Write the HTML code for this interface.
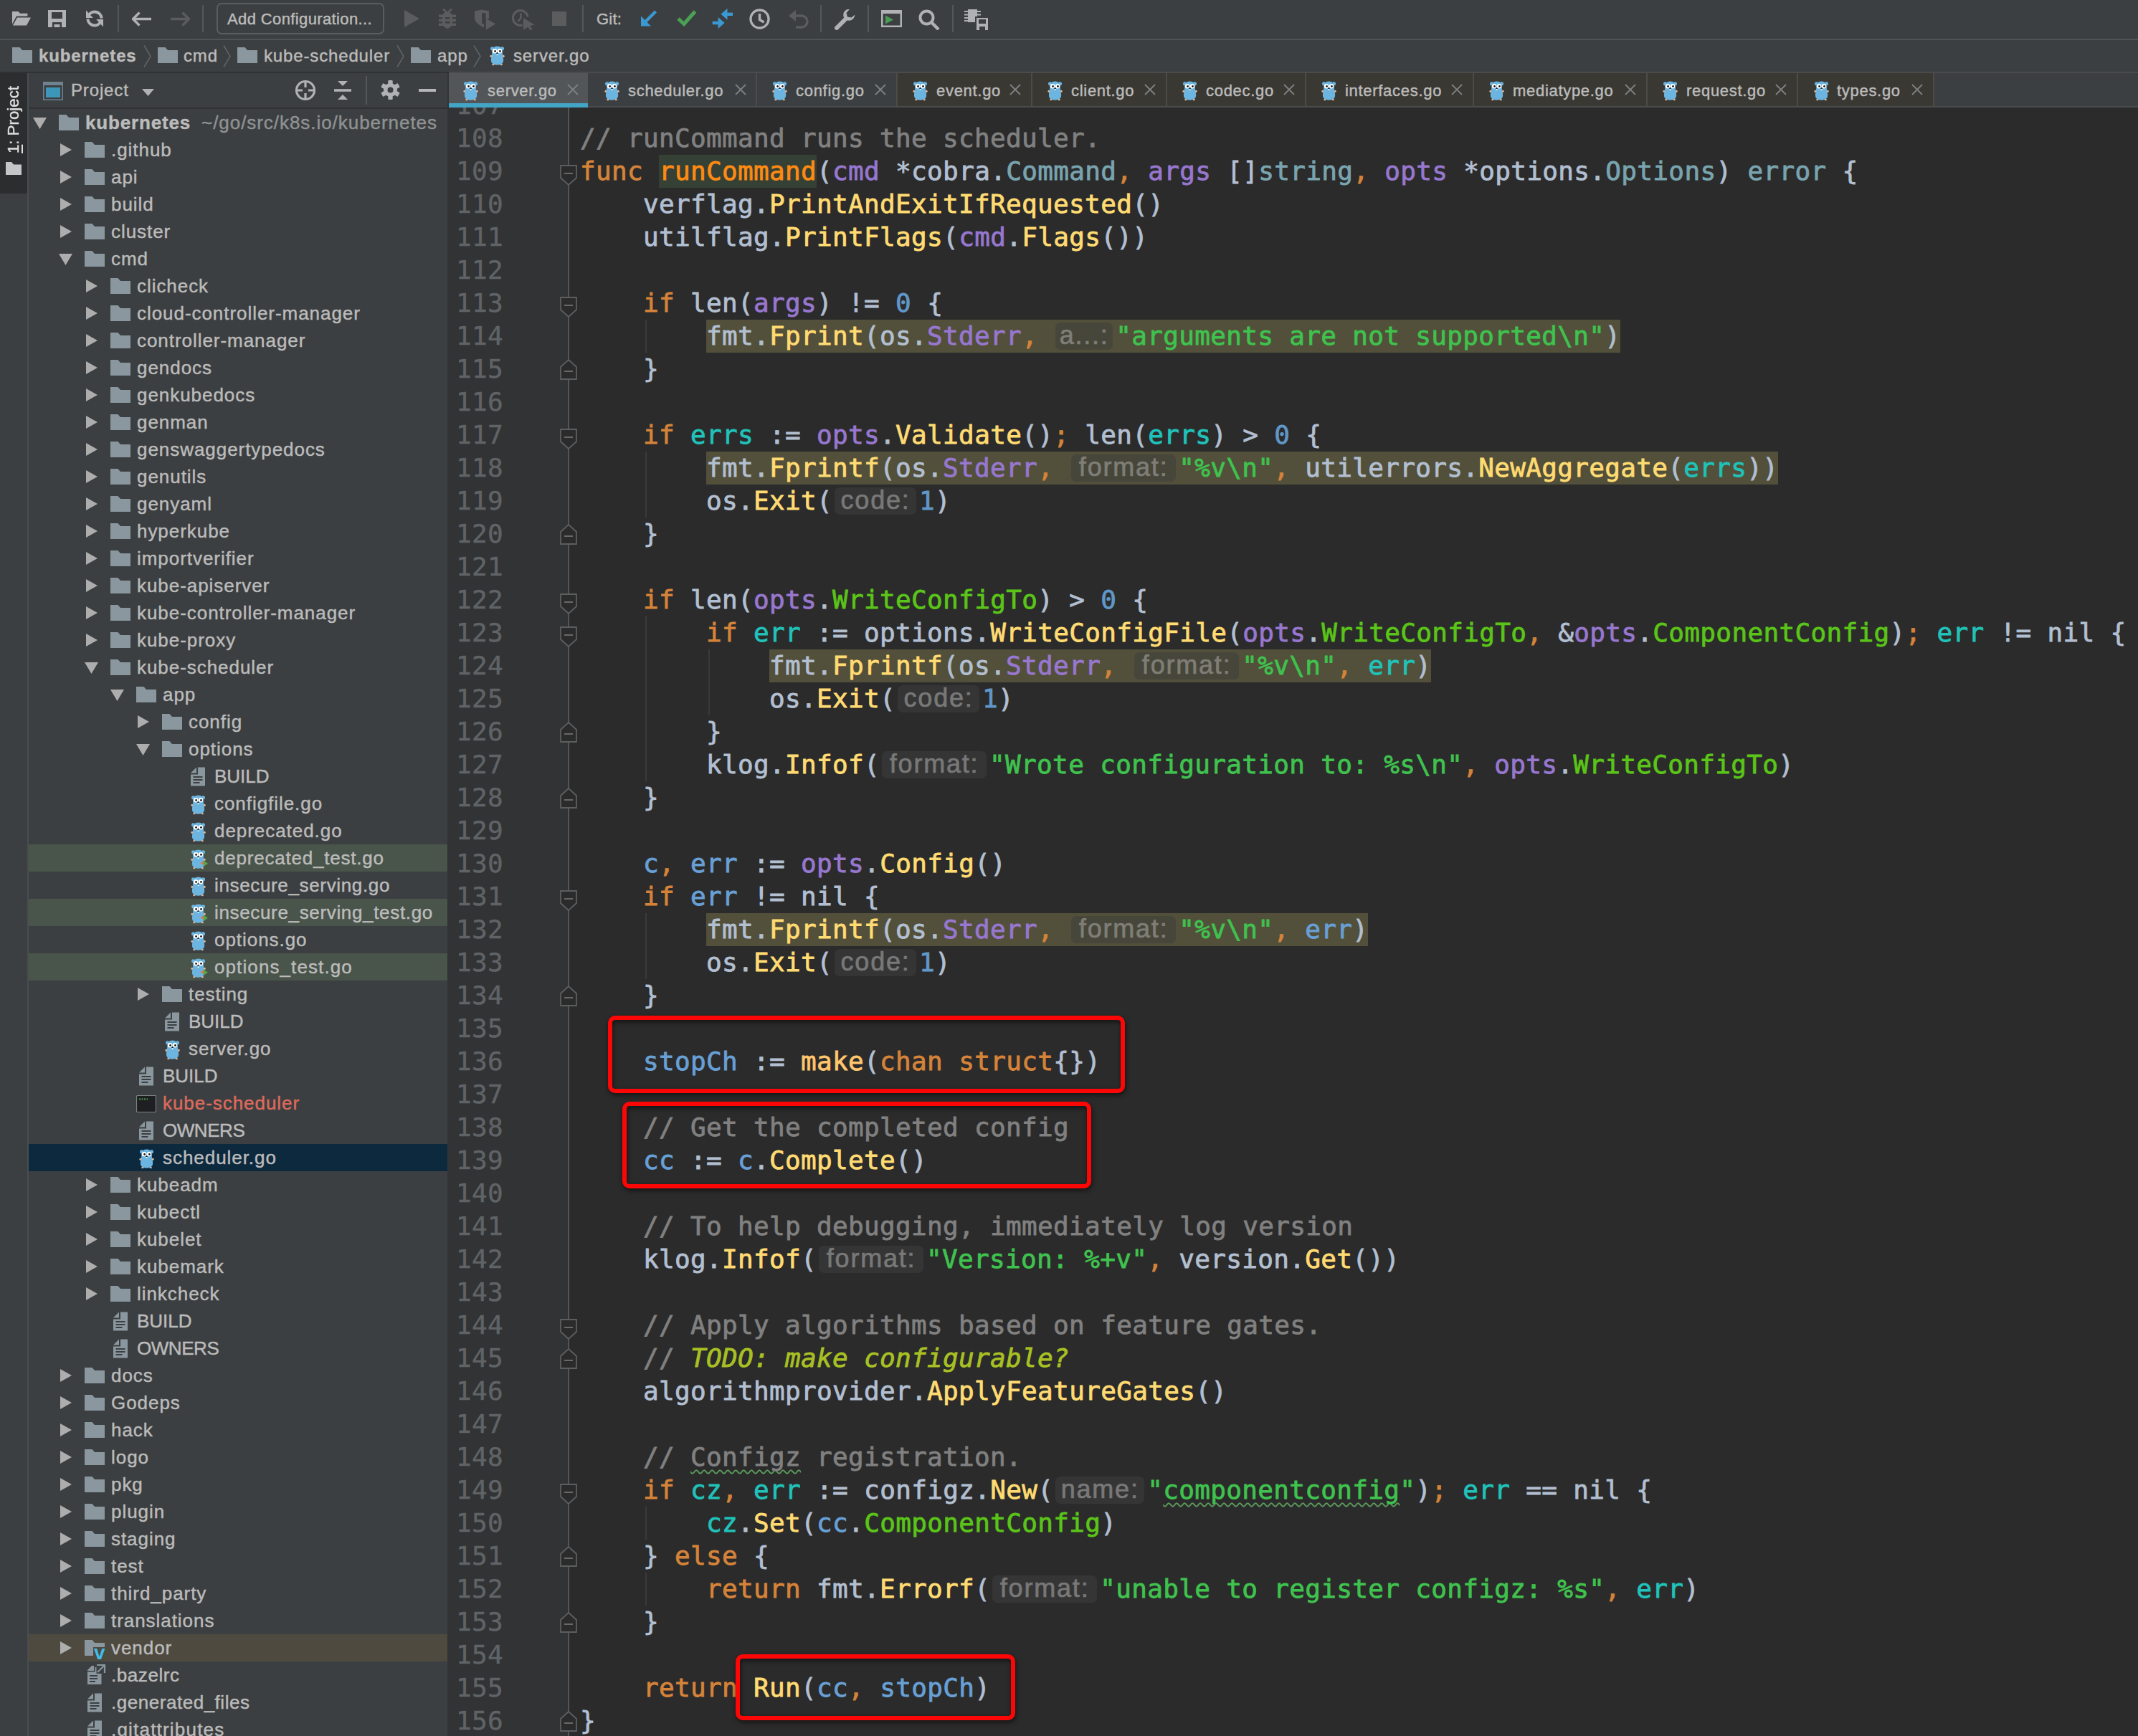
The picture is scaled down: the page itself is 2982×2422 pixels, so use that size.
<!DOCTYPE html>
<html><head><meta charset="utf-8"><title>server.go - kubernetes</title>
<style>
*{box-sizing:border-box;margin:0;padding:0}
html,body{width:2982px;height:2422px;overflow:hidden;background:#3c3f41}
body{position:relative;font-family:"Liberation Sans",sans-serif;font-size:26px;color:#bbbbbb;letter-spacing:0.95px;-webkit-text-stroke:0.45px currentColor}
.ab{position:absolute}
.t{position:absolute;white-space:pre;line-height:38px;height:38px}
.b{font-weight:bold;letter-spacing:0.83px}
.s22{font-size:22px;letter-spacing:0.7px}
.s24{font-size:24px;letter-spacing:0.85px}
#toolbar{left:0;top:0;width:2982px;height:54px;background:#3c3f41}
#tbline{left:0;top:54px;width:2982px;height:2px;background:#515456}
#crumbs{left:0;top:56px;width:2982px;height:44px;background:#3c3f41}
#crline{left:0;top:100px;width:2982px;height:2px;background:#2f3133}
#strip{left:0;top:102px;width:38px;height:2320px;background:#3c3f41}
#striptab{left:0;top:102px;width:38px;height:168px;background:#2b2d2f}
#stripline{left:38px;top:102px;width:2px;height:2320px;background:#4a4d4f}
#side{left:40px;top:102px;width:584px;height:2320px;background:#3c3f41;overflow:hidden}
#sidehead{left:0;top:0;width:584px;height:48px}
#sideline{left:0;top:48px;width:584px;height:2px;background:#2f3133}
#split{left:624px;top:102px;width:2px;height:2320px;background:#313335}
#tabs{left:626px;top:102px;width:2356px;height:48px}
#tabline{left:626px;top:148px;width:2356px;height:2px;background:#4b4b4b}
.tab{position:absolute;top:0;height:46px;border-right:2px solid #4b4b4b}
.tab.v{background:#3a3833;border-right-color:#4c4b48}
.tab .t{top:6px;color:#bbbbbb;font-size:22px;letter-spacing:0.7px}
.x{position:absolute;top:15px;width:16px;height:16px}
#editor{left:626px;top:150px;width:2356px;height:2272px;background:#2b2b2b;overflow:hidden}
#gutter{left:0;top:0;width:166px;height:2272px;background:#313335}
#gline{left:166px;top:0;width:2px;height:2272px;background:#555555}
.ln,.cl{-webkit-text-stroke:0.8px currentColor;position:absolute;font-family:"DejaVu Sans Mono","Liberation Mono",monospace;font-size:36px;letter-spacing:0.33px;line-height:46px;height:46px;white-space:pre}
.ln{left:10px;color:#606366;-webkit-text-stroke:0.45px currentColor}
.cl{left:183px;color:#b2bfd1}
.k{color:#d58339}.fd{color:#ff8a12;background:#344134;display:inline-block;height:46px}
.fc{color:#ffdb72}.p{color:#9777cf}.ty{color:#79a4af}.s{color:#3fc24e}.n{color:#6097c8}
.sv{color:#20c2ba}.lv{color:#68a0d6}.f{color:#5ac418}.c{color:#808080}.td{color:#a8c023;font-style:italic}
.hl{background:#52503a;display:inline-block;height:46px}
.h{display:inline-block;height:38px;line-height:36px;margin:0 4px 0 3px;border-radius:7px;background:#353535;color:#787878;font-family:"Liberation Sans",sans-serif;font-size:36px;letter-spacing:1.8px;text-align:center;vertical-align:top;margin-top:4px;font-style:normal;overflow:hidden;-webkit-text-stroke:0.7px currentColor}
.hl .h{background:#47463b;color:#7f7e76}
.bf{color:#ffc66d}
.cw{color:#808080;text-decoration:underline wavy #5c9a5c 2.4px;text-underline-offset:5px;text-decoration-skip-ink:none}
.sw{color:#3fc24e;text-decoration:underline wavy #5c9a5c 2.4px;text-underline-offset:5px;text-decoration-skip-ink:none}
.row{position:absolute;left:0;width:584px;height:38px}
.g{background:#49544a}.sel{background:#0d293e}.vd{background:#4e4a3f}
.red{position:absolute;border:6px solid #fd0606;border-radius:10px;filter:drop-shadow(1px 3px 3px rgba(0,0,0,.6))}
.fold{position:absolute;left:155px;width:24px;height:29px}
.ig{position:absolute;width:2px;background:#3a3a3a}
</style></head><body>

<div id="toolbar" class="ab">
<svg class="ab" style="left:16px;top:16px" width="28" height="20.5" viewBox="0 0 28 22"><path d="M0 0h9l3 3h11v4H6.500L0 19z" fill="#afb1b3"/><path d="M7.500 9H28l-6.500 12H1z" fill="#afb1b3"/></svg>
<svg class="ab" style="left:67px;top:14px" width="25" height="24" viewBox="0 0 25 24"><path d="M0 0h25v24H0z" fill="#afb1b3"/><path d="M5 3h15v9H5z" fill="#3c3f41"/><path d="M6 17h13v7H6z" fill="#3c3f41"/><path d="M8.500 20h8v4h-8z" fill="#afb1b3"/></svg>
<svg class="ab" style="left:120px;top:14px" width="24" height="24" viewBox="0 0 24 24"><path d="M3.600 7.500A9.600 9.600 0 0 1 21.600 11.500" fill="none" stroke="#afb1b3" stroke-width="4"/><path d="M0 0.500V11h9.800z" fill="#afb1b3"/><path d="M20.400 16.500A9.600 9.600 0 0 1 2.400 12.500" fill="none" stroke="#afb1b3" stroke-width="4"/><path d="M24 23.500V13h-9.800z" fill="#afb1b3"/></svg>
<div class="ab" style="left:164px;top:7px;width:2px;height:38px;background:#555759"></div>
<svg class="ab" style="left:184px;top:16px" width="27" height="21" viewBox="0 0 27 21"><path d="M10.500 1.500l-9 9 9 9M2 10.500h25" fill="none" stroke="#afb1b3" stroke-width="3.400"/></svg>
<svg class="ab" style="left:238px;top:16px" width="27" height="21" viewBox="0 0 27 21"><path d="M16.500 1.500l9 9-9 9M25 10.500H0" fill="none" stroke="#5a5c5e" stroke-width="3.400"/></svg>
<div class="ab" style="left:282px;top:7px;width:2px;height:38px;background:#555759"></div>
<div class="ab" style="left:302px;top:4px;width:234px;height:44px;border:2px solid #5a5d5f;border-radius:7px"></div>
<div class="t s22" style="left:317px;top:8px;letter-spacing:0.38px">Add Configuration...</div>
<svg class="ab" style="left:564px;top:14px" width="21" height="24" viewBox="0 0 21 24"><path d="M0 0l21 12L0 24z" fill="#5a5c5e"/></svg>
<svg class="ab" style="left:612px;top:12px" width="24" height="28" viewBox="0 0 24 28"><path d="M6 0.500l5 5M18 0.500l-5 5" stroke="#5a5c5e" stroke-width="3"/><path d="M0 8.500h24v3.500H0zM0 14.500h24v3.500H0zM0 20.500h24v3.500H0z" fill="#5a5c5e"/><path d="M5 11a7 6.500 0 0 1 14 0v9.500c0 4-3.500 6-7 7.500-3.500-1.500-7-3.500-7-7.500z" fill="#5a5c5e"/><path d="M9 12h6.500v2.500H9zM9 18h6.500v2.500H9z" fill="#3c3f41"/></svg>
<svg class="ab" style="left:661px;top:13px" width="31" height="29" viewBox="0 0 31 29"><path d="M1 2.500L10.500 0.500 21 2.500V13h-7v12C5 21.500 1 17 1 11z" fill="#5a5c5e"/><path d="M11.200 5.200h5.300v15h-5.300z" fill="#3c3f41"/><path d="M16.800 12.700l13.500 7.800-13.500 7.900z" fill="#5a5c5e"/></svg>
<svg class="ab" style="left:713px;top:12px" width="34" height="31" viewBox="0 0 34 31"><circle cx="12.800" cy="13" r="10.400" fill="none" stroke="#5a5c5e" stroke-width="3"/><path d="M13.500 6.500v6.500l-4 5" fill="none" stroke="#5a5c5e" stroke-width="2.600"/><path d="M15.500 11.500h18v19h-18z" fill="#3c3f41"/><path d="M17 13l15.600 9.500-6.600 1.800 3.600 4.400-2.800 1.800-3.400-4.700-6.400 3.700z" fill="#5a5c5e"/></svg>
<svg class="ab" style="left:770px;top:16px" width="20" height="20" viewBox="0 0 20 20"><rect width="20" height="20" fill="#5a5c5e"/></svg>
<div class="ab" style="left:812px;top:7px;width:2px;height:38px;background:#555759"></div>
<div class="t s22" style="left:832px;top:8px;letter-spacing:0.2px">Git:</div>
<svg class="ab" style="left:893px;top:14px" width="24" height="24" viewBox="0 0 24 24"><path d="M21.500 2L5 18.500" stroke="#3a99d2" stroke-width="4.200"/><path d="M1 8.500V22.500h14z" fill="#3a99d2"/></svg>
<svg class="ab" style="left:944px;top:14px" width="28" height="23" viewBox="0 0 28 23"><path d="M2 12l8 7.500L25.500 2" fill="none" stroke="#4aa155" stroke-width="5"/></svg>
<svg class="ab" style="left:993px;top:11px" width="30" height="30" viewBox="0 0 30 30"><path d="M29 8.800H19" stroke="#3a99d2" stroke-width="4.400"/><path d="M21.500 0.800v16l-9-8z" fill="#3a99d2"/><path d="M0.700 21H10" stroke="#3a99d2" stroke-width="4.400"/><path d="M8.600 13v16l9-8z" fill="#3a99d2"/></svg>
<svg class="ab" style="left:1045px;top:12px" width="29" height="29" viewBox="0 0 29 29"><circle cx="14.500" cy="14.500" r="12.500" fill="none" stroke="#afb1b3" stroke-width="3.400"/><path d="M14.500 7v8.500l6 3.500" fill="none" stroke="#afb1b3" stroke-width="3.400"/></svg>
<svg class="ab" style="left:1100px;top:14px" width="28" height="26" viewBox="0 0 28 26"><path d="M6 8h12a8 8 0 0 1 0 16h-8" fill="none" stroke="#5a5c5e" stroke-width="3.400"/><path d="M0 8l10-8v16z" fill="#5a5c5e"/></svg>
<div class="ab" style="left:1144px;top:7px;width:2px;height:38px;background:#555759"></div>
<svg class="ab" style="left:1164px;top:13px" width="29" height="29" viewBox="0 0 29 29"><path d="M3 26L17 12" stroke="#afb1b3" stroke-width="6" stroke-linecap="round"/><path d="M28 5.500l-5 5-5-1-1-5 5-4.500a8 8 0 1 0 6 6z" fill="#afb1b3"/><circle cx="20" cy="9" r="6" fill="#afb1b3"/><path d="M21 0l-4.500 5 1.500 5.500 5.500 1L29 7V0z" fill="#3c3f41"/></svg>
<div class="ab" style="left:1210px;top:7px;width:2px;height:38px;background:#555759"></div>
<svg class="ab" style="left:1229px;top:14px" width="29" height="24" viewBox="0 0 29 24"><path d="M0 0h29v24H0z" fill="#afb1b3"/><path d="M2.500 5h24v16.500h-24z" fill="#3c3f41"/><path d="M6 7.500l11 6-11 6z" fill="#499c54"/></svg>
<svg class="ab" style="left:1281px;top:13px" width="30" height="29" viewBox="0 0 30 29"><circle cx="11.500" cy="11.500" r="9" fill="none" stroke="#afb1b3" stroke-width="4"/><path d="M18 18l10 10" stroke="#afb1b3" stroke-width="4.500"/></svg>
<div class="ab" style="left:1328px;top:7px;width:2px;height:38px;background:#555759"></div>
<svg class="ab" style="left:1345px;top:13px" width="34" height="30" viewBox="0 0 34 30"><path d="M5 0h13v18H5z" fill="#afb1b3"/><path d="M0 3h5M0 7.500h5M0 12h5M0 16h5M18 3h5M18 7.500h5" stroke="#afb1b3" stroke-width="2.200"/><path d="M16 11h18v19H16z" fill="#afb1b3" stroke="#3c3f41" stroke-width="2"/><path d="M20 14h10v6H20zM21 24h8v5h-8z" fill="#3c3f41"/></svg>
</div>
<div id="tbline" class="ab"></div>
<div id="crumbs" class="ab">
<svg class="ab" style="left:17px;top:10px" width="28" height="22" viewBox="0 0 28 22"><path d="M0 0h10.5l3.5 4H28v18H0z" fill="#8a979f"/></svg>
<div class="t s24 b" style="left:54px;top:3px">kubernetes</div>
<svg class="ab" style="left:200px;top:7px" width="11" height="31" viewBox="0 0 11 31"><path d="M1 0.500l9 15-9 15" fill="none" stroke="#5f6365" stroke-width="1.600"/></svg>
<svg class="ab" style="left:220px;top:10px" width="28" height="22" viewBox="0 0 28 22"><path d="M0 0h10.5l3.5 4H28v18H0z" fill="#8a979f"/></svg>
<div class="t s24" style="left:256px;top:3px">cmd</div>
<svg class="ab" style="left:311px;top:7px" width="11" height="31" viewBox="0 0 11 31"><path d="M1 0.500l9 15-9 15" fill="none" stroke="#5f6365" stroke-width="1.600"/></svg>
<svg class="ab" style="left:331px;top:10px" width="28" height="22" viewBox="0 0 28 22"><path d="M0 0h10.5l3.5 4H28v18H0z" fill="#8a979f"/></svg>
<div class="t s24" style="left:368px;top:3px">kube-scheduler</div>
<svg class="ab" style="left:553px;top:7px" width="11" height="31" viewBox="0 0 11 31"><path d="M1 0.500l9 15-9 15" fill="none" stroke="#5f6365" stroke-width="1.600"/></svg>
<svg class="ab" style="left:573px;top:10px" width="28" height="22" viewBox="0 0 28 22"><path d="M0 0h10.5l3.5 4H28v18H0z" fill="#8a979f"/></svg>
<div class="t s24" style="left:610px;top:3px">app</div>
<svg class="ab" style="left:660px;top:7px" width="11" height="31" viewBox="0 0 11 31"><path d="M1 0.500l9 15-9 15" fill="none" stroke="#5f6365" stroke-width="1.600"/></svg>
<svg class="ab" style="left:683px;top:7px" width="21.1" height="28.8" viewBox="0 0 22 30"><circle cx="3.800" cy="5" r="2.700" fill="#6cb5e0"/><circle cx="18.200" cy="5" r="2.700" fill="#6cb5e0"/><path d="M11 1.500C6 1.500 3.500 5 3.500 10c0 4-1.500 7.500-1.500 12 0 4.800 4 7 9 7s9-2.200 9-7c0-4.500-1.500-8-1.500-12 0-5-2.500-8.500-7.500-8.500z" fill="#6cb5e0"/><ellipse cx="1.900" cy="16" rx="1.500" ry="1.800" fill="#dcb89a"/><ellipse cx="20.100" cy="16" rx="1.500" ry="1.800" fill="#dcb89a"/><ellipse cx="5" cy="28.300" rx="1.700" ry="1.200" fill="#dcb89a"/><ellipse cx="17" cy="28.300" rx="1.700" ry="1.200" fill="#dcb89a"/><circle cx="7.400" cy="8.600" r="3.400" fill="#fff"/><circle cx="14.600" cy="8.600" r="3.400" fill="#fff"/><circle cx="7.900" cy="8.800" r="1.400" fill="#111"/><circle cx="15.100" cy="8.800" r="1.400" fill="#111"/><ellipse cx="11" cy="11.700" rx="1.400" ry="1.100" fill="#222"/><rect x="10" y="12.700" width="2" height="1.900" rx="0.500" fill="#fff"/></svg>
<div class="t s24" style="left:716px;top:3px">server.go</div>
</div>
<div id="crline" class="ab"></div>
<div id="strip" class="ab"></div><div id="striptab" class="ab">
<div class="ab" style="left:0;top:18px;width:38px;height:94px;writing-mode:vertical-rl;transform:rotate(180deg);color:#dfdfdf;white-space:pre;letter-spacing:0.1px;font-size:22px;line-height:38px;text-align:center"><span style="text-decoration:underline">1</span>: Project</div>
<svg class="ab" style="left:8px;top:124px" width="22" height="18" viewBox="0 0 22 18"><path d="M0 0h8l3 3.500h11V18H0z" fill="#c4c6c8"/></svg>
</div><div id="stripline" class="ab"></div>
<div id="side" class="ab">
<div id="sidehead" class="ab">
<svg class="ab" style="left:20px;top:12px" width="28" height="26" viewBox="0 0 28 26"><path d="M0 0h28v26H0z" fill="#6e8290"/><path d="M1.500 5h25v19.500h-25z" fill="#3c3f41"/><path d="M4 8h20v14H4z" fill="#3d96b8"/></svg>
<div class="t s24" style="left:59px;top:5px">Project</div>
<svg class="ab" style="left:158px;top:22px" width="17" height="10" viewBox="0 0 17 10"><path d="M0 0h17l-8.500 10z" fill="#afb1b3"/></svg>
<svg class="ab" style="left:371px;top:9px" width="30" height="30" viewBox="0 0 30 30"><circle cx="15" cy="15" r="12.500" fill="none" stroke="#afb1b3" stroke-width="3.200"/><path d="M15 2v9M15 19v9M2 15h9M19 15h9" stroke="#afb1b3" stroke-width="3.200"/></svg>
<svg class="ab" style="left:426px;top:11px" width="24" height="26" viewBox="0 0 24 26"><path d="M5 0h14l-7 7z" fill="#afb1b3"/><path d="M0 11.200h24v3.600H0z" fill="#afb1b3"/><path d="M5 26h14l-7-7z" fill="#afb1b3"/></svg>
<div class="ab" style="left:470px;top:4px;width:2px;height:40px;background:#555759"></div>
<svg class="ab" style="left:491px;top:10px" width="27" height="27" viewBox="0 0 27 27"><g transform="translate(13.500 13.500)"><rect x="-3.200" y="-13.500" width="6.400" height="8" rx="1" fill="#afb1b3" transform="rotate(0)"/><rect x="-3.200" y="-13.500" width="6.400" height="8" rx="1" fill="#afb1b3" transform="rotate(60)"/><rect x="-3.200" y="-13.500" width="6.400" height="8" rx="1" fill="#afb1b3" transform="rotate(120)"/><rect x="-3.200" y="-13.500" width="6.400" height="8" rx="1" fill="#afb1b3" transform="rotate(180)"/><rect x="-3.200" y="-13.500" width="6.400" height="8" rx="1" fill="#afb1b3" transform="rotate(240)"/><rect x="-3.200" y="-13.500" width="6.400" height="8" rx="1" fill="#afb1b3" transform="rotate(300)"/><circle r="9.500" fill="#afb1b3"/><circle r="4" fill="#3c3f41"/></g></svg>
<div class="ab" style="left:544px;top:22px;width:24px;height:4px;background:#b4b6b8"></div>
</div><div id="sideline" class="ab"></div>
<div class="row" style="top:50px">
<svg class="ab" style="left:6px;top:12px" width="19" height="16" viewBox="0 0 19 16"><path d="M0 0h19l-9.500 16z" fill="#adadad"/></svg>
<svg class="ab" style="left:42px;top:8px" width="28" height="22" viewBox="0 0 28 22"><path d="M0 0h10.5l3.5 4H28v18H0z" fill="#8a979f"/></svg>
<div class="t b" style="left:79px;top:0">kubernetes</div>
<div class="t" style="left:241px;top:0;color:#8f9193">~/go/src/k8s.io/kubernetes</div>
</div>
<div class="row" style="top:88px">
<svg class="ab" style="left:44px;top:10px" width="16" height="18" viewBox="0 0 16 18"><path d="M0 0l16 9-16 9z" fill="#adadad"/></svg>
<svg class="ab" style="left:78px;top:8px" width="28" height="22" viewBox="0 0 28 22"><path d="M0 0h10.5l3.5 4H28v18H0z" fill="#8a979f"/></svg>
<div class="t" style="left:115px;top:0">.github</div>
</div>
<div class="row" style="top:126px">
<svg class="ab" style="left:44px;top:10px" width="16" height="18" viewBox="0 0 16 18"><path d="M0 0l16 9-16 9z" fill="#adadad"/></svg>
<svg class="ab" style="left:78px;top:8px" width="28" height="22" viewBox="0 0 28 22"><path d="M0 0h10.5l3.5 4H28v18H0z" fill="#8a979f"/></svg>
<div class="t" style="left:115px;top:0">api</div>
</div>
<div class="row" style="top:164px">
<svg class="ab" style="left:44px;top:10px" width="16" height="18" viewBox="0 0 16 18"><path d="M0 0l16 9-16 9z" fill="#adadad"/></svg>
<svg class="ab" style="left:78px;top:8px" width="28" height="22" viewBox="0 0 28 22"><path d="M0 0h10.5l3.5 4H28v18H0z" fill="#8a979f"/></svg>
<div class="t" style="left:115px;top:0">build</div>
</div>
<div class="row" style="top:202px">
<svg class="ab" style="left:44px;top:10px" width="16" height="18" viewBox="0 0 16 18"><path d="M0 0l16 9-16 9z" fill="#adadad"/></svg>
<svg class="ab" style="left:78px;top:8px" width="28" height="22" viewBox="0 0 28 22"><path d="M0 0h10.5l3.5 4H28v18H0z" fill="#8a979f"/></svg>
<div class="t" style="left:115px;top:0">cluster</div>
</div>
<div class="row" style="top:240px">
<svg class="ab" style="left:42px;top:12px" width="19" height="16" viewBox="0 0 19 16"><path d="M0 0h19l-9.500 16z" fill="#adadad"/></svg>
<svg class="ab" style="left:78px;top:8px" width="28" height="22" viewBox="0 0 28 22"><path d="M0 0h10.5l3.5 4H28v18H0z" fill="#8a979f"/></svg>
<div class="t" style="left:115px;top:0">cmd</div>
</div>
<div class="row" style="top:278px">
<svg class="ab" style="left:80px;top:10px" width="16" height="18" viewBox="0 0 16 18"><path d="M0 0l16 9-16 9z" fill="#adadad"/></svg>
<svg class="ab" style="left:114px;top:8px" width="28" height="22" viewBox="0 0 28 22"><path d="M0 0h10.5l3.5 4H28v18H0z" fill="#8a979f"/></svg>
<div class="t" style="left:151px;top:0">clicheck</div>
</div>
<div class="row" style="top:316px">
<svg class="ab" style="left:80px;top:10px" width="16" height="18" viewBox="0 0 16 18"><path d="M0 0l16 9-16 9z" fill="#adadad"/></svg>
<svg class="ab" style="left:114px;top:8px" width="28" height="22" viewBox="0 0 28 22"><path d="M0 0h10.5l3.5 4H28v18H0z" fill="#8a979f"/></svg>
<div class="t" style="left:151px;top:0">cloud-controller-manager</div>
</div>
<div class="row" style="top:354px">
<svg class="ab" style="left:80px;top:10px" width="16" height="18" viewBox="0 0 16 18"><path d="M0 0l16 9-16 9z" fill="#adadad"/></svg>
<svg class="ab" style="left:114px;top:8px" width="28" height="22" viewBox="0 0 28 22"><path d="M0 0h10.5l3.5 4H28v18H0z" fill="#8a979f"/></svg>
<div class="t" style="left:151px;top:0">controller-manager</div>
</div>
<div class="row" style="top:392px">
<svg class="ab" style="left:80px;top:10px" width="16" height="18" viewBox="0 0 16 18"><path d="M0 0l16 9-16 9z" fill="#adadad"/></svg>
<svg class="ab" style="left:114px;top:8px" width="28" height="22" viewBox="0 0 28 22"><path d="M0 0h10.5l3.5 4H28v18H0z" fill="#8a979f"/></svg>
<div class="t" style="left:151px;top:0">gendocs</div>
</div>
<div class="row" style="top:430px">
<svg class="ab" style="left:80px;top:10px" width="16" height="18" viewBox="0 0 16 18"><path d="M0 0l16 9-16 9z" fill="#adadad"/></svg>
<svg class="ab" style="left:114px;top:8px" width="28" height="22" viewBox="0 0 28 22"><path d="M0 0h10.5l3.5 4H28v18H0z" fill="#8a979f"/></svg>
<div class="t" style="left:151px;top:0">genkubedocs</div>
</div>
<div class="row" style="top:468px">
<svg class="ab" style="left:80px;top:10px" width="16" height="18" viewBox="0 0 16 18"><path d="M0 0l16 9-16 9z" fill="#adadad"/></svg>
<svg class="ab" style="left:114px;top:8px" width="28" height="22" viewBox="0 0 28 22"><path d="M0 0h10.5l3.5 4H28v18H0z" fill="#8a979f"/></svg>
<div class="t" style="left:151px;top:0">genman</div>
</div>
<div class="row" style="top:506px">
<svg class="ab" style="left:80px;top:10px" width="16" height="18" viewBox="0 0 16 18"><path d="M0 0l16 9-16 9z" fill="#adadad"/></svg>
<svg class="ab" style="left:114px;top:8px" width="28" height="22" viewBox="0 0 28 22"><path d="M0 0h10.5l3.5 4H28v18H0z" fill="#8a979f"/></svg>
<div class="t" style="left:151px;top:0">genswaggertypedocs</div>
</div>
<div class="row" style="top:544px">
<svg class="ab" style="left:80px;top:10px" width="16" height="18" viewBox="0 0 16 18"><path d="M0 0l16 9-16 9z" fill="#adadad"/></svg>
<svg class="ab" style="left:114px;top:8px" width="28" height="22" viewBox="0 0 28 22"><path d="M0 0h10.5l3.5 4H28v18H0z" fill="#8a979f"/></svg>
<div class="t" style="left:151px;top:0">genutils</div>
</div>
<div class="row" style="top:582px">
<svg class="ab" style="left:80px;top:10px" width="16" height="18" viewBox="0 0 16 18"><path d="M0 0l16 9-16 9z" fill="#adadad"/></svg>
<svg class="ab" style="left:114px;top:8px" width="28" height="22" viewBox="0 0 28 22"><path d="M0 0h10.5l3.5 4H28v18H0z" fill="#8a979f"/></svg>
<div class="t" style="left:151px;top:0">genyaml</div>
</div>
<div class="row" style="top:620px">
<svg class="ab" style="left:80px;top:10px" width="16" height="18" viewBox="0 0 16 18"><path d="M0 0l16 9-16 9z" fill="#adadad"/></svg>
<svg class="ab" style="left:114px;top:8px" width="28" height="22" viewBox="0 0 28 22"><path d="M0 0h10.5l3.5 4H28v18H0z" fill="#8a979f"/></svg>
<div class="t" style="left:151px;top:0">hyperkube</div>
</div>
<div class="row" style="top:658px">
<svg class="ab" style="left:80px;top:10px" width="16" height="18" viewBox="0 0 16 18"><path d="M0 0l16 9-16 9z" fill="#adadad"/></svg>
<svg class="ab" style="left:114px;top:8px" width="28" height="22" viewBox="0 0 28 22"><path d="M0 0h10.5l3.5 4H28v18H0z" fill="#8a979f"/></svg>
<div class="t" style="left:151px;top:0">importverifier</div>
</div>
<div class="row" style="top:696px">
<svg class="ab" style="left:80px;top:10px" width="16" height="18" viewBox="0 0 16 18"><path d="M0 0l16 9-16 9z" fill="#adadad"/></svg>
<svg class="ab" style="left:114px;top:8px" width="28" height="22" viewBox="0 0 28 22"><path d="M0 0h10.5l3.5 4H28v18H0z" fill="#8a979f"/></svg>
<div class="t" style="left:151px;top:0">kube-apiserver</div>
</div>
<div class="row" style="top:734px">
<svg class="ab" style="left:80px;top:10px" width="16" height="18" viewBox="0 0 16 18"><path d="M0 0l16 9-16 9z" fill="#adadad"/></svg>
<svg class="ab" style="left:114px;top:8px" width="28" height="22" viewBox="0 0 28 22"><path d="M0 0h10.5l3.5 4H28v18H0z" fill="#8a979f"/></svg>
<div class="t" style="left:151px;top:0">kube-controller-manager</div>
</div>
<div class="row" style="top:772px">
<svg class="ab" style="left:80px;top:10px" width="16" height="18" viewBox="0 0 16 18"><path d="M0 0l16 9-16 9z" fill="#adadad"/></svg>
<svg class="ab" style="left:114px;top:8px" width="28" height="22" viewBox="0 0 28 22"><path d="M0 0h10.5l3.5 4H28v18H0z" fill="#8a979f"/></svg>
<div class="t" style="left:151px;top:0">kube-proxy</div>
</div>
<div class="row" style="top:810px">
<svg class="ab" style="left:78px;top:12px" width="19" height="16" viewBox="0 0 19 16"><path d="M0 0h19l-9.500 16z" fill="#adadad"/></svg>
<svg class="ab" style="left:114px;top:8px" width="28" height="22" viewBox="0 0 28 22"><path d="M0 0h10.5l3.5 4H28v18H0z" fill="#8a979f"/></svg>
<div class="t" style="left:151px;top:0">kube-scheduler</div>
</div>
<div class="row" style="top:848px">
<svg class="ab" style="left:114px;top:12px" width="19" height="16" viewBox="0 0 19 16"><path d="M0 0h19l-9.500 16z" fill="#adadad"/></svg>
<svg class="ab" style="left:150px;top:8px" width="28" height="22" viewBox="0 0 28 22"><path d="M0 0h10.5l3.5 4H28v18H0z" fill="#8a979f"/></svg>
<div class="t" style="left:187px;top:0">app</div>
</div>
<div class="row" style="top:886px">
<svg class="ab" style="left:152px;top:10px" width="16" height="18" viewBox="0 0 16 18"><path d="M0 0l16 9-16 9z" fill="#adadad"/></svg>
<svg class="ab" style="left:186px;top:8px" width="28" height="22" viewBox="0 0 28 22"><path d="M0 0h10.5l3.5 4H28v18H0z" fill="#8a979f"/></svg>
<div class="t" style="left:223px;top:0">config</div>
</div>
<div class="row" style="top:924px">
<svg class="ab" style="left:150px;top:12px" width="19" height="16" viewBox="0 0 19 16"><path d="M0 0h19l-9.500 16z" fill="#adadad"/></svg>
<svg class="ab" style="left:186px;top:8px" width="28" height="22" viewBox="0 0 28 22"><path d="M0 0h10.5l3.5 4H28v18H0z" fill="#8a979f"/></svg>
<div class="t" style="left:223px;top:0">options</div>
</div>
<div class="row" style="top:962px">
<svg class="ab" style="left:226px;top:6px" width="26" height="30" viewBox="0 0 26 30"><path d="M0 8.500L8 0.500V8.500z" fill="#8a979f"/><path d="M10 0.500H20V26.500H0V10.500H10z" fill="#8a979f"/><path d="M3.500 14h13M3.500 18h13M3.500 22h9" stroke="#3c3f41" stroke-width="2"/></svg>
<div class="t" style="left:259px;top:0;letter-spacing:0.0px">BUILD</div>
</div>
<div class="row" style="top:1000px">
<svg class="ab" style="left:226px;top:6px" width="21.1" height="28.8" viewBox="0 0 22 30"><circle cx="3.800" cy="5" r="2.700" fill="#6cb5e0"/><circle cx="18.200" cy="5" r="2.700" fill="#6cb5e0"/><path d="M11 1.500C6 1.500 3.500 5 3.500 10c0 4-1.500 7.500-1.500 12 0 4.800 4 7 9 7s9-2.200 9-7c0-4.500-1.500-8-1.500-12 0-5-2.500-8.500-7.500-8.500z" fill="#6cb5e0"/><ellipse cx="1.900" cy="16" rx="1.500" ry="1.800" fill="#dcb89a"/><ellipse cx="20.100" cy="16" rx="1.500" ry="1.800" fill="#dcb89a"/><ellipse cx="5" cy="28.300" rx="1.700" ry="1.200" fill="#dcb89a"/><ellipse cx="17" cy="28.300" rx="1.700" ry="1.200" fill="#dcb89a"/><circle cx="7.400" cy="8.600" r="3.400" fill="#fff"/><circle cx="14.600" cy="8.600" r="3.400" fill="#fff"/><circle cx="7.900" cy="8.800" r="1.400" fill="#111"/><circle cx="15.100" cy="8.800" r="1.400" fill="#111"/><ellipse cx="11" cy="11.700" rx="1.400" ry="1.100" fill="#222"/><rect x="10" y="12.700" width="2" height="1.900" rx="0.500" fill="#fff"/></svg>
<div class="t" style="left:259px;top:0">configfile.go</div>
</div>
<div class="row" style="top:1038px">
<svg class="ab" style="left:226px;top:6px" width="21.1" height="28.8" viewBox="0 0 22 30"><circle cx="3.800" cy="5" r="2.700" fill="#6cb5e0"/><circle cx="18.200" cy="5" r="2.700" fill="#6cb5e0"/><path d="M11 1.500C6 1.500 3.500 5 3.500 10c0 4-1.500 7.500-1.500 12 0 4.800 4 7 9 7s9-2.200 9-7c0-4.500-1.500-8-1.500-12 0-5-2.500-8.500-7.500-8.500z" fill="#6cb5e0"/><ellipse cx="1.900" cy="16" rx="1.500" ry="1.800" fill="#dcb89a"/><ellipse cx="20.100" cy="16" rx="1.500" ry="1.800" fill="#dcb89a"/><ellipse cx="5" cy="28.300" rx="1.700" ry="1.200" fill="#dcb89a"/><ellipse cx="17" cy="28.300" rx="1.700" ry="1.200" fill="#dcb89a"/><circle cx="7.400" cy="8.600" r="3.400" fill="#fff"/><circle cx="14.600" cy="8.600" r="3.400" fill="#fff"/><circle cx="7.900" cy="8.800" r="1.400" fill="#111"/><circle cx="15.100" cy="8.800" r="1.400" fill="#111"/><ellipse cx="11" cy="11.700" rx="1.400" ry="1.100" fill="#222"/><rect x="10" y="12.700" width="2" height="1.900" rx="0.500" fill="#fff"/></svg>
<div class="t" style="left:259px;top:0">deprecated.go</div>
</div>
<div class="row g" style="top:1076px">
<svg class="ab" style="left:226px;top:6px" width="25.0" height="28.8" viewBox="0 0 26 30"><circle cx="3.800" cy="5" r="2.700" fill="#6cb5e0"/><circle cx="18.200" cy="5" r="2.700" fill="#6cb5e0"/><path d="M11 1.500C6 1.500 3.500 5 3.500 10c0 4-1.500 7.500-1.500 12 0 4.800 4 7 9 7s9-2.200 9-7c0-4.500-1.500-8-1.500-12 0-5-2.500-8.500-7.500-8.500z" fill="#6cb5e0"/><ellipse cx="1.900" cy="16" rx="1.500" ry="1.800" fill="#dcb89a"/><ellipse cx="20.100" cy="16" rx="1.500" ry="1.800" fill="#dcb89a"/><ellipse cx="5" cy="28.300" rx="1.700" ry="1.200" fill="#dcb89a"/><ellipse cx="17" cy="28.300" rx="1.700" ry="1.200" fill="#dcb89a"/><circle cx="7.400" cy="8.600" r="3.400" fill="#fff"/><circle cx="14.600" cy="8.600" r="3.400" fill="#fff"/><circle cx="7.900" cy="8.800" r="1.400" fill="#111"/><circle cx="15.100" cy="8.800" r="1.400" fill="#111"/><ellipse cx="11" cy="11.700" rx="1.400" ry="1.100" fill="#222"/><rect x="10" y="12.700" width="2" height="1.900" rx="0.500" fill="#fff"/><path d="M19.500 17.500l-5.500 3.500 5.500 3.500z" fill="#e8734a"/><path d="M18.500 17l6.500 4.500-6.500 4.500z" fill="#57a64a"/></svg>
<div class="t" style="left:259px;top:0;letter-spacing:0.78px">deprecated_test.go</div>
</div>
<div class="row" style="top:1114px">
<svg class="ab" style="left:226px;top:6px" width="21.1" height="28.8" viewBox="0 0 22 30"><circle cx="3.800" cy="5" r="2.700" fill="#6cb5e0"/><circle cx="18.200" cy="5" r="2.700" fill="#6cb5e0"/><path d="M11 1.500C6 1.500 3.500 5 3.500 10c0 4-1.500 7.500-1.500 12 0 4.800 4 7 9 7s9-2.200 9-7c0-4.500-1.500-8-1.500-12 0-5-2.500-8.500-7.500-8.500z" fill="#6cb5e0"/><ellipse cx="1.900" cy="16" rx="1.500" ry="1.800" fill="#dcb89a"/><ellipse cx="20.100" cy="16" rx="1.500" ry="1.800" fill="#dcb89a"/><ellipse cx="5" cy="28.300" rx="1.700" ry="1.200" fill="#dcb89a"/><ellipse cx="17" cy="28.300" rx="1.700" ry="1.200" fill="#dcb89a"/><circle cx="7.400" cy="8.600" r="3.400" fill="#fff"/><circle cx="14.600" cy="8.600" r="3.400" fill="#fff"/><circle cx="7.900" cy="8.800" r="1.400" fill="#111"/><circle cx="15.100" cy="8.800" r="1.400" fill="#111"/><ellipse cx="11" cy="11.700" rx="1.400" ry="1.100" fill="#222"/><rect x="10" y="12.700" width="2" height="1.900" rx="0.500" fill="#fff"/></svg>
<div class="t" style="left:259px;top:0;letter-spacing:0.65px">insecure_serving.go</div>
</div>
<div class="row g" style="top:1152px">
<svg class="ab" style="left:226px;top:6px" width="25.0" height="28.8" viewBox="0 0 26 30"><circle cx="3.800" cy="5" r="2.700" fill="#6cb5e0"/><circle cx="18.200" cy="5" r="2.700" fill="#6cb5e0"/><path d="M11 1.500C6 1.500 3.500 5 3.500 10c0 4-1.500 7.500-1.500 12 0 4.800 4 7 9 7s9-2.200 9-7c0-4.500-1.500-8-1.500-12 0-5-2.500-8.500-7.500-8.500z" fill="#6cb5e0"/><ellipse cx="1.900" cy="16" rx="1.500" ry="1.800" fill="#dcb89a"/><ellipse cx="20.100" cy="16" rx="1.500" ry="1.800" fill="#dcb89a"/><ellipse cx="5" cy="28.300" rx="1.700" ry="1.200" fill="#dcb89a"/><ellipse cx="17" cy="28.300" rx="1.700" ry="1.200" fill="#dcb89a"/><circle cx="7.400" cy="8.600" r="3.400" fill="#fff"/><circle cx="14.600" cy="8.600" r="3.400" fill="#fff"/><circle cx="7.900" cy="8.800" r="1.400" fill="#111"/><circle cx="15.100" cy="8.800" r="1.400" fill="#111"/><ellipse cx="11" cy="11.700" rx="1.400" ry="1.100" fill="#222"/><rect x="10" y="12.700" width="2" height="1.900" rx="0.500" fill="#fff"/><path d="M19.500 17.500l-5.500 3.500 5.500 3.500z" fill="#e8734a"/><path d="M18.500 17l6.500 4.500-6.500 4.500z" fill="#57a64a"/></svg>
<div class="t" style="left:259px;top:0;letter-spacing:0.66px">insecure_serving_test.go</div>
</div>
<div class="row" style="top:1190px">
<svg class="ab" style="left:226px;top:6px" width="21.1" height="28.8" viewBox="0 0 22 30"><circle cx="3.800" cy="5" r="2.700" fill="#6cb5e0"/><circle cx="18.200" cy="5" r="2.700" fill="#6cb5e0"/><path d="M11 1.500C6 1.500 3.500 5 3.500 10c0 4-1.500 7.500-1.500 12 0 4.800 4 7 9 7s9-2.200 9-7c0-4.500-1.500-8-1.500-12 0-5-2.500-8.500-7.500-8.500z" fill="#6cb5e0"/><ellipse cx="1.900" cy="16" rx="1.500" ry="1.800" fill="#dcb89a"/><ellipse cx="20.100" cy="16" rx="1.500" ry="1.800" fill="#dcb89a"/><ellipse cx="5" cy="28.300" rx="1.700" ry="1.200" fill="#dcb89a"/><ellipse cx="17" cy="28.300" rx="1.700" ry="1.200" fill="#dcb89a"/><circle cx="7.400" cy="8.600" r="3.400" fill="#fff"/><circle cx="14.600" cy="8.600" r="3.400" fill="#fff"/><circle cx="7.900" cy="8.800" r="1.400" fill="#111"/><circle cx="15.100" cy="8.800" r="1.400" fill="#111"/><ellipse cx="11" cy="11.700" rx="1.400" ry="1.100" fill="#222"/><rect x="10" y="12.700" width="2" height="1.900" rx="0.500" fill="#fff"/></svg>
<div class="t" style="left:259px;top:0">options.go</div>
</div>
<div class="row g" style="top:1228px">
<svg class="ab" style="left:226px;top:6px" width="25.0" height="28.8" viewBox="0 0 26 30"><circle cx="3.800" cy="5" r="2.700" fill="#6cb5e0"/><circle cx="18.200" cy="5" r="2.700" fill="#6cb5e0"/><path d="M11 1.500C6 1.500 3.500 5 3.500 10c0 4-1.500 7.500-1.500 12 0 4.800 4 7 9 7s9-2.200 9-7c0-4.500-1.500-8-1.500-12 0-5-2.500-8.500-7.500-8.500z" fill="#6cb5e0"/><ellipse cx="1.900" cy="16" rx="1.500" ry="1.800" fill="#dcb89a"/><ellipse cx="20.100" cy="16" rx="1.500" ry="1.800" fill="#dcb89a"/><ellipse cx="5" cy="28.300" rx="1.700" ry="1.200" fill="#dcb89a"/><ellipse cx="17" cy="28.300" rx="1.700" ry="1.200" fill="#dcb89a"/><circle cx="7.400" cy="8.600" r="3.400" fill="#fff"/><circle cx="14.600" cy="8.600" r="3.400" fill="#fff"/><circle cx="7.900" cy="8.800" r="1.400" fill="#111"/><circle cx="15.100" cy="8.800" r="1.400" fill="#111"/><ellipse cx="11" cy="11.700" rx="1.400" ry="1.100" fill="#222"/><rect x="10" y="12.700" width="2" height="1.900" rx="0.500" fill="#fff"/><path d="M19.500 17.500l-5.500 3.500 5.500 3.500z" fill="#e8734a"/><path d="M18.500 17l6.500 4.500-6.500 4.500z" fill="#57a64a"/></svg>
<div class="t" style="left:259px;top:0;letter-spacing:1.1px">options_test.go</div>
</div>
<div class="row" style="top:1266px">
<svg class="ab" style="left:152px;top:10px" width="16" height="18" viewBox="0 0 16 18"><path d="M0 0l16 9-16 9z" fill="#adadad"/></svg>
<svg class="ab" style="left:186px;top:8px" width="28" height="22" viewBox="0 0 28 22"><path d="M0 0h10.5l3.5 4H28v18H0z" fill="#8a979f"/></svg>
<div class="t" style="left:223px;top:0">testing</div>
</div>
<div class="row" style="top:1304px">
<svg class="ab" style="left:190px;top:6px" width="26" height="30" viewBox="0 0 26 30"><path d="M0 8.500L8 0.500V8.500z" fill="#8a979f"/><path d="M10 0.500H20V26.500H0V10.500H10z" fill="#8a979f"/><path d="M3.500 14h13M3.500 18h13M3.500 22h9" stroke="#3c3f41" stroke-width="2"/></svg>
<div class="t" style="left:223px;top:0;letter-spacing:0.0px">BUILD</div>
</div>
<div class="row" style="top:1342px">
<svg class="ab" style="left:190px;top:6px" width="21.1" height="28.8" viewBox="0 0 22 30"><circle cx="3.800" cy="5" r="2.700" fill="#6cb5e0"/><circle cx="18.200" cy="5" r="2.700" fill="#6cb5e0"/><path d="M11 1.500C6 1.500 3.500 5 3.500 10c0 4-1.500 7.500-1.500 12 0 4.800 4 7 9 7s9-2.200 9-7c0-4.500-1.500-8-1.500-12 0-5-2.500-8.500-7.500-8.500z" fill="#6cb5e0"/><ellipse cx="1.900" cy="16" rx="1.500" ry="1.800" fill="#dcb89a"/><ellipse cx="20.100" cy="16" rx="1.500" ry="1.800" fill="#dcb89a"/><ellipse cx="5" cy="28.300" rx="1.700" ry="1.200" fill="#dcb89a"/><ellipse cx="17" cy="28.300" rx="1.700" ry="1.200" fill="#dcb89a"/><circle cx="7.400" cy="8.600" r="3.400" fill="#fff"/><circle cx="14.600" cy="8.600" r="3.400" fill="#fff"/><circle cx="7.900" cy="8.800" r="1.400" fill="#111"/><circle cx="15.100" cy="8.800" r="1.400" fill="#111"/><ellipse cx="11" cy="11.700" rx="1.400" ry="1.100" fill="#222"/><rect x="10" y="12.700" width="2" height="1.900" rx="0.500" fill="#fff"/></svg>
<div class="t" style="left:223px;top:0">server.go</div>
</div>
<div class="row" style="top:1380px">
<svg class="ab" style="left:154px;top:6px" width="26" height="30" viewBox="0 0 26 30"><path d="M0 8.500L8 0.500V8.500z" fill="#8a979f"/><path d="M10 0.500H20V26.500H0V10.500H10z" fill="#8a979f"/><path d="M3.500 14h13M3.500 18h13M3.500 22h9" stroke="#3c3f41" stroke-width="2"/></svg>
<div class="t" style="left:187px;top:0;letter-spacing:0.0px">BUILD</div>
</div>
<div class="row" style="top:1418px">
<svg class="ab" style="left:150px;top:8px" width="28" height="24" viewBox="0 0 28 24"><rect x="0.500" y="0.500" width="27" height="23" rx="1.500" fill="#1e1f20" stroke="#7f8386" stroke-width="1.200"/><path d="M4 5.500h2M7.500 5.500h2M11 5.500h2M14.500 5.500h1.500" stroke="#4aa04a" stroke-width="2"/></svg>
<div class="t" style="left:187px;top:0;color:#dd6a5c">kube-scheduler</div>
</div>
<div class="row" style="top:1456px">
<svg class="ab" style="left:154px;top:6px" width="26" height="30" viewBox="0 0 26 30"><path d="M0 8.500L8 0.500V8.500z" fill="#8a979f"/><path d="M10 0.500H20V26.500H0V10.500H10z" fill="#8a979f"/><path d="M3.500 14h13M3.500 18h13M3.500 22h9" stroke="#3c3f41" stroke-width="2"/></svg>
<div class="t" style="left:187px;top:0;letter-spacing:-0.45px">OWNERS</div>
</div>
<div class="row sel" style="top:1494px">
<svg class="ab" style="left:154px;top:6px" width="21.1" height="28.8" viewBox="0 0 22 30"><circle cx="3.800" cy="5" r="2.700" fill="#6cb5e0"/><circle cx="18.200" cy="5" r="2.700" fill="#6cb5e0"/><path d="M11 1.500C6 1.500 3.500 5 3.500 10c0 4-1.500 7.500-1.500 12 0 4.800 4 7 9 7s9-2.200 9-7c0-4.500-1.500-8-1.500-12 0-5-2.500-8.500-7.500-8.500z" fill="#6cb5e0"/><ellipse cx="1.900" cy="16" rx="1.500" ry="1.800" fill="#dcb89a"/><ellipse cx="20.100" cy="16" rx="1.500" ry="1.800" fill="#dcb89a"/><ellipse cx="5" cy="28.300" rx="1.700" ry="1.200" fill="#dcb89a"/><ellipse cx="17" cy="28.300" rx="1.700" ry="1.200" fill="#dcb89a"/><circle cx="7.400" cy="8.600" r="3.400" fill="#fff"/><circle cx="14.600" cy="8.600" r="3.400" fill="#fff"/><circle cx="7.900" cy="8.800" r="1.400" fill="#111"/><circle cx="15.100" cy="8.800" r="1.400" fill="#111"/><ellipse cx="11" cy="11.700" rx="1.400" ry="1.100" fill="#222"/><rect x="10" y="12.700" width="2" height="1.900" rx="0.500" fill="#fff"/></svg>
<div class="t" style="left:187px;top:0">scheduler.go</div>
</div>
<div class="row" style="top:1532px">
<svg class="ab" style="left:80px;top:10px" width="16" height="18" viewBox="0 0 16 18"><path d="M0 0l16 9-16 9z" fill="#adadad"/></svg>
<svg class="ab" style="left:114px;top:8px" width="28" height="22" viewBox="0 0 28 22"><path d="M0 0h10.5l3.5 4H28v18H0z" fill="#8a979f"/></svg>
<div class="t" style="left:151px;top:0">kubeadm</div>
</div>
<div class="row" style="top:1570px">
<svg class="ab" style="left:80px;top:10px" width="16" height="18" viewBox="0 0 16 18"><path d="M0 0l16 9-16 9z" fill="#adadad"/></svg>
<svg class="ab" style="left:114px;top:8px" width="28" height="22" viewBox="0 0 28 22"><path d="M0 0h10.5l3.5 4H28v18H0z" fill="#8a979f"/></svg>
<div class="t" style="left:151px;top:0">kubectl</div>
</div>
<div class="row" style="top:1608px">
<svg class="ab" style="left:80px;top:10px" width="16" height="18" viewBox="0 0 16 18"><path d="M0 0l16 9-16 9z" fill="#adadad"/></svg>
<svg class="ab" style="left:114px;top:8px" width="28" height="22" viewBox="0 0 28 22"><path d="M0 0h10.5l3.5 4H28v18H0z" fill="#8a979f"/></svg>
<div class="t" style="left:151px;top:0">kubelet</div>
</div>
<div class="row" style="top:1646px">
<svg class="ab" style="left:80px;top:10px" width="16" height="18" viewBox="0 0 16 18"><path d="M0 0l16 9-16 9z" fill="#adadad"/></svg>
<svg class="ab" style="left:114px;top:8px" width="28" height="22" viewBox="0 0 28 22"><path d="M0 0h10.5l3.5 4H28v18H0z" fill="#8a979f"/></svg>
<div class="t" style="left:151px;top:0">kubemark</div>
</div>
<div class="row" style="top:1684px">
<svg class="ab" style="left:80px;top:10px" width="16" height="18" viewBox="0 0 16 18"><path d="M0 0l16 9-16 9z" fill="#adadad"/></svg>
<svg class="ab" style="left:114px;top:8px" width="28" height="22" viewBox="0 0 28 22"><path d="M0 0h10.5l3.5 4H28v18H0z" fill="#8a979f"/></svg>
<div class="t" style="left:151px;top:0">linkcheck</div>
</div>
<div class="row" style="top:1722px">
<svg class="ab" style="left:118px;top:6px" width="26" height="30" viewBox="0 0 26 30"><path d="M0 8.500L8 0.500V8.500z" fill="#8a979f"/><path d="M10 0.500H20V26.500H0V10.500H10z" fill="#8a979f"/><path d="M3.500 14h13M3.500 18h13M3.500 22h9" stroke="#3c3f41" stroke-width="2"/></svg>
<div class="t" style="left:151px;top:0;letter-spacing:0.0px">BUILD</div>
</div>
<div class="row" style="top:1760px">
<svg class="ab" style="left:118px;top:6px" width="26" height="30" viewBox="0 0 26 30"><path d="M0 8.500L8 0.500V8.500z" fill="#8a979f"/><path d="M10 0.500H20V26.500H0V10.500H10z" fill="#8a979f"/><path d="M3.500 14h13M3.500 18h13M3.500 22h9" stroke="#3c3f41" stroke-width="2"/></svg>
<div class="t" style="left:151px;top:0;letter-spacing:-0.45px">OWNERS</div>
</div>
<div class="row" style="top:1798px">
<svg class="ab" style="left:44px;top:10px" width="16" height="18" viewBox="0 0 16 18"><path d="M0 0l16 9-16 9z" fill="#adadad"/></svg>
<svg class="ab" style="left:78px;top:8px" width="28" height="22" viewBox="0 0 28 22"><path d="M0 0h10.5l3.5 4H28v18H0z" fill="#8a979f"/></svg>
<div class="t" style="left:115px;top:0">docs</div>
</div>
<div class="row" style="top:1836px">
<svg class="ab" style="left:44px;top:10px" width="16" height="18" viewBox="0 0 16 18"><path d="M0 0l16 9-16 9z" fill="#adadad"/></svg>
<svg class="ab" style="left:78px;top:8px" width="28" height="22" viewBox="0 0 28 22"><path d="M0 0h10.5l3.5 4H28v18H0z" fill="#8a979f"/></svg>
<div class="t" style="left:115px;top:0">Godeps</div>
</div>
<div class="row" style="top:1874px">
<svg class="ab" style="left:44px;top:10px" width="16" height="18" viewBox="0 0 16 18"><path d="M0 0l16 9-16 9z" fill="#adadad"/></svg>
<svg class="ab" style="left:78px;top:8px" width="28" height="22" viewBox="0 0 28 22"><path d="M0 0h10.5l3.5 4H28v18H0z" fill="#8a979f"/></svg>
<div class="t" style="left:115px;top:0">hack</div>
</div>
<div class="row" style="top:1912px">
<svg class="ab" style="left:44px;top:10px" width="16" height="18" viewBox="0 0 16 18"><path d="M0 0l16 9-16 9z" fill="#adadad"/></svg>
<svg class="ab" style="left:78px;top:8px" width="28" height="22" viewBox="0 0 28 22"><path d="M0 0h10.5l3.5 4H28v18H0z" fill="#8a979f"/></svg>
<div class="t" style="left:115px;top:0">logo</div>
</div>
<div class="row" style="top:1950px">
<svg class="ab" style="left:44px;top:10px" width="16" height="18" viewBox="0 0 16 18"><path d="M0 0l16 9-16 9z" fill="#adadad"/></svg>
<svg class="ab" style="left:78px;top:8px" width="28" height="22" viewBox="0 0 28 22"><path d="M0 0h10.5l3.5 4H28v18H0z" fill="#8a979f"/></svg>
<div class="t" style="left:115px;top:0">pkg</div>
</div>
<div class="row" style="top:1988px">
<svg class="ab" style="left:44px;top:10px" width="16" height="18" viewBox="0 0 16 18"><path d="M0 0l16 9-16 9z" fill="#adadad"/></svg>
<svg class="ab" style="left:78px;top:8px" width="28" height="22" viewBox="0 0 28 22"><path d="M0 0h10.5l3.5 4H28v18H0z" fill="#8a979f"/></svg>
<div class="t" style="left:115px;top:0">plugin</div>
</div>
<div class="row" style="top:2026px">
<svg class="ab" style="left:44px;top:10px" width="16" height="18" viewBox="0 0 16 18"><path d="M0 0l16 9-16 9z" fill="#adadad"/></svg>
<svg class="ab" style="left:78px;top:8px" width="28" height="22" viewBox="0 0 28 22"><path d="M0 0h10.5l3.5 4H28v18H0z" fill="#8a979f"/></svg>
<div class="t" style="left:115px;top:0">staging</div>
</div>
<div class="row" style="top:2064px">
<svg class="ab" style="left:44px;top:10px" width="16" height="18" viewBox="0 0 16 18"><path d="M0 0l16 9-16 9z" fill="#adadad"/></svg>
<svg class="ab" style="left:78px;top:8px" width="28" height="22" viewBox="0 0 28 22"><path d="M0 0h10.5l3.5 4H28v18H0z" fill="#8a979f"/></svg>
<div class="t" style="left:115px;top:0">test</div>
</div>
<div class="row" style="top:2102px">
<svg class="ab" style="left:44px;top:10px" width="16" height="18" viewBox="0 0 16 18"><path d="M0 0l16 9-16 9z" fill="#adadad"/></svg>
<svg class="ab" style="left:78px;top:8px" width="28" height="22" viewBox="0 0 28 22"><path d="M0 0h10.5l3.5 4H28v18H0z" fill="#8a979f"/></svg>
<div class="t" style="left:115px;top:0">third_party</div>
</div>
<div class="row" style="top:2140px">
<svg class="ab" style="left:44px;top:10px" width="16" height="18" viewBox="0 0 16 18"><path d="M0 0l16 9-16 9z" fill="#adadad"/></svg>
<svg class="ab" style="left:78px;top:8px" width="28" height="22" viewBox="0 0 28 22"><path d="M0 0h10.5l3.5 4H28v18H0z" fill="#8a979f"/></svg>
<div class="t" style="left:115px;top:0">translations</div>
</div>
<div class="row vd" style="top:2178px">
<svg class="ab" style="left:44px;top:10px" width="16" height="18" viewBox="0 0 16 18"><path d="M0 0l16 9-16 9z" fill="#adadad"/></svg>
<svg class="ab" style="left:78px;top:8px" width="28" height="22" viewBox="0 0 28 22"><path d="M0 0h10.5l3.5 4H28v18H0z" fill="#8a979f"/></svg>
<div class="ab" style="left:90px;top:18px;width:17px;height:13px;background:#4e4a3f"></div>
<div class="ab" style="left:91px;top:7px;font-size:28px;font-weight:bold;color:#40bde8;line-height:38px;letter-spacing:0;-webkit-text-stroke:0">v</div>
<div class="t" style="left:115px;top:0">vendor</div>
</div>
<div class="row" style="top:2216px">
<svg class="ab" style="left:82px;top:4px" width="26" height="30" viewBox="0 0 26 30"><path d="M0 8L6 2H9V9H0z" fill="#8a979f"/><path d="M0 10.5h10.500V4h2v9h7v15H0z" fill="#8a979f"/><path d="M3 16h11M3 20h11M3 24h8" stroke="#3c3f41" stroke-width="2"/><path d="M13 1h11v11" fill="none" stroke="#8a979f" stroke-width="2.2"/><path d="M23.500 1.500L14 11" stroke="#8a979f" stroke-width="2.200"/></svg>
<div class="t" style="left:115px;top:0;letter-spacing:0.57px">.bazelrc</div>
</div>
<div class="row" style="top:2254px">
<svg class="ab" style="left:82px;top:6px" width="26" height="30" viewBox="0 0 26 30"><path d="M0 8.500L8 0.500V8.500z" fill="#8a979f"/><path d="M10 0.500H20V26.500H0V10.500H10z" fill="#8a979f"/><path d="M3.500 14h13M3.500 18h13M3.500 22h9" stroke="#3c3f41" stroke-width="2"/></svg>
<div class="t" style="left:115px;top:0;letter-spacing:0.53px">.generated_files</div>
</div>
<div class="row" style="top:2292px">
<svg class="ab" style="left:82px;top:6px" width="26" height="30" viewBox="0 0 26 30"><path d="M0 8.500L8 0.500V8.500z" fill="#8a979f"/><path d="M10 0.500H20V26.500H0V10.500H10z" fill="#8a979f"/><path d="M3.500 14h13M3.500 18h13M3.500 22h9" stroke="#3c3f41" stroke-width="2"/></svg>
<div class="t" style="left:115px;top:0;letter-spacing:1.2px">.gitattributes</div>
</div>
</div><div id="split" class="ab"></div>
<div id="tabline" class="ab"></div><div class="ab" style="left:626px;top:100px;width:2356px;height:2px;background:#4b4b4b"></div>
<div id="tabs" class="ab" style="background:none">
<div class="tab" style="left:0px;width:194px;background:#525658;border-right:none;height:48px">
<svg class="ab" style="left:20px;top:10px" width="21.1" height="28.8" viewBox="0 0 22 30"><circle cx="3.800" cy="5" r="2.700" fill="#6cb5e0"/><circle cx="18.200" cy="5" r="2.700" fill="#6cb5e0"/><path d="M11 1.500C6 1.500 3.500 5 3.500 10c0 4-1.500 7.500-1.500 12 0 4.800 4 7 9 7s9-2.200 9-7c0-4.500-1.500-8-1.500-12 0-5-2.500-8.500-7.500-8.500z" fill="#6cb5e0"/><ellipse cx="1.900" cy="16" rx="1.500" ry="1.800" fill="#dcb89a"/><ellipse cx="20.100" cy="16" rx="1.500" ry="1.800" fill="#dcb89a"/><ellipse cx="5" cy="28.300" rx="1.700" ry="1.200" fill="#dcb89a"/><ellipse cx="17" cy="28.300" rx="1.700" ry="1.200" fill="#dcb89a"/><circle cx="7.400" cy="8.600" r="3.400" fill="#fff"/><circle cx="14.600" cy="8.600" r="3.400" fill="#fff"/><circle cx="7.900" cy="8.800" r="1.400" fill="#111"/><circle cx="15.100" cy="8.800" r="1.400" fill="#111"/><ellipse cx="11" cy="11.700" rx="1.400" ry="1.100" fill="#222"/><rect x="10" y="12.700" width="2" height="1.900" rx="0.500" fill="#fff"/></svg>
<div class="t" style="left:54px">server.go</div>
<svg class="x" style="left:165px" viewBox="0 0 16 16"><path d="M1 1l14 14M15 1L1 15" stroke="#7d8082" stroke-width="1.800"/></svg>
<div class="ab" style="left:0;top:42px;width:194px;height:6px;background:#43a5c6"></div>
</div>
<div class="tab" style="left:194px;width:236px">
<svg class="ab" style="left:23px;top:10px" width="21.1" height="28.8" viewBox="0 0 22 30"><circle cx="3.800" cy="5" r="2.700" fill="#6cb5e0"/><circle cx="18.200" cy="5" r="2.700" fill="#6cb5e0"/><path d="M11 1.500C6 1.500 3.500 5 3.500 10c0 4-1.500 7.500-1.500 12 0 4.800 4 7 9 7s9-2.200 9-7c0-4.500-1.500-8-1.500-12 0-5-2.500-8.500-7.500-8.500z" fill="#6cb5e0"/><ellipse cx="1.900" cy="16" rx="1.500" ry="1.800" fill="#dcb89a"/><ellipse cx="20.100" cy="16" rx="1.500" ry="1.800" fill="#dcb89a"/><ellipse cx="5" cy="28.300" rx="1.700" ry="1.200" fill="#dcb89a"/><ellipse cx="17" cy="28.300" rx="1.700" ry="1.200" fill="#dcb89a"/><circle cx="7.400" cy="8.600" r="3.400" fill="#fff"/><circle cx="14.600" cy="8.600" r="3.400" fill="#fff"/><circle cx="7.900" cy="8.800" r="1.400" fill="#111"/><circle cx="15.100" cy="8.800" r="1.400" fill="#111"/><ellipse cx="11" cy="11.700" rx="1.400" ry="1.100" fill="#222"/><rect x="10" y="12.700" width="2" height="1.900" rx="0.500" fill="#fff"/></svg>
<div class="t" style="left:56px">scheduler.go</div>
<svg class="x" style="left:205px" viewBox="0 0 16 16"><path d="M1 1l14 14M15 1L1 15" stroke="#7d8082" stroke-width="1.800"/></svg>
</div>
<div class="tab" style="left:430px;width:196px">
<svg class="ab" style="left:21px;top:10px" width="21.1" height="28.8" viewBox="0 0 22 30"><circle cx="3.800" cy="5" r="2.700" fill="#6cb5e0"/><circle cx="18.200" cy="5" r="2.700" fill="#6cb5e0"/><path d="M11 1.500C6 1.500 3.500 5 3.500 10c0 4-1.500 7.500-1.500 12 0 4.800 4 7 9 7s9-2.200 9-7c0-4.500-1.500-8-1.500-12 0-5-2.500-8.500-7.500-8.500z" fill="#6cb5e0"/><ellipse cx="1.900" cy="16" rx="1.500" ry="1.800" fill="#dcb89a"/><ellipse cx="20.100" cy="16" rx="1.500" ry="1.800" fill="#dcb89a"/><ellipse cx="5" cy="28.300" rx="1.700" ry="1.200" fill="#dcb89a"/><ellipse cx="17" cy="28.300" rx="1.700" ry="1.200" fill="#dcb89a"/><circle cx="7.400" cy="8.600" r="3.400" fill="#fff"/><circle cx="14.600" cy="8.600" r="3.400" fill="#fff"/><circle cx="7.900" cy="8.800" r="1.400" fill="#111"/><circle cx="15.100" cy="8.800" r="1.400" fill="#111"/><ellipse cx="11" cy="11.700" rx="1.400" ry="1.100" fill="#222"/><rect x="10" y="12.700" width="2" height="1.900" rx="0.500" fill="#fff"/></svg>
<div class="t" style="left:54px">config.go</div>
<svg class="x" style="left:164px" viewBox="0 0 16 16"><path d="M1 1l14 14M15 1L1 15" stroke="#7d8082" stroke-width="1.800"/></svg>
</div>
<div class="tab v" style="left:626px;width:188px">
<svg class="ab" style="left:21px;top:10px" width="21.1" height="28.8" viewBox="0 0 22 30"><circle cx="3.800" cy="5" r="2.700" fill="#6cb5e0"/><circle cx="18.200" cy="5" r="2.700" fill="#6cb5e0"/><path d="M11 1.500C6 1.500 3.500 5 3.500 10c0 4-1.500 7.500-1.500 12 0 4.800 4 7 9 7s9-2.200 9-7c0-4.500-1.500-8-1.500-12 0-5-2.500-8.500-7.500-8.500z" fill="#6cb5e0"/><ellipse cx="1.900" cy="16" rx="1.500" ry="1.800" fill="#dcb89a"/><ellipse cx="20.100" cy="16" rx="1.500" ry="1.800" fill="#dcb89a"/><ellipse cx="5" cy="28.300" rx="1.700" ry="1.200" fill="#dcb89a"/><ellipse cx="17" cy="28.300" rx="1.700" ry="1.200" fill="#dcb89a"/><circle cx="7.400" cy="8.600" r="3.400" fill="#fff"/><circle cx="14.600" cy="8.600" r="3.400" fill="#fff"/><circle cx="7.900" cy="8.800" r="1.400" fill="#111"/><circle cx="15.100" cy="8.800" r="1.400" fill="#111"/><ellipse cx="11" cy="11.700" rx="1.400" ry="1.100" fill="#222"/><rect x="10" y="12.700" width="2" height="1.900" rx="0.500" fill="#fff"/></svg>
<div class="t" style="left:54px">event.go</div>
<svg class="x" style="left:156px" viewBox="0 0 16 16"><path d="M1 1l14 14M15 1L1 15" stroke="#7d8082" stroke-width="1.800"/></svg>
</div>
<div class="tab v" style="left:814px;width:188px">
<svg class="ab" style="left:21px;top:10px" width="21.1" height="28.8" viewBox="0 0 22 30"><circle cx="3.800" cy="5" r="2.700" fill="#6cb5e0"/><circle cx="18.200" cy="5" r="2.700" fill="#6cb5e0"/><path d="M11 1.500C6 1.500 3.500 5 3.500 10c0 4-1.500 7.500-1.500 12 0 4.800 4 7 9 7s9-2.200 9-7c0-4.500-1.500-8-1.500-12 0-5-2.500-8.500-7.500-8.500z" fill="#6cb5e0"/><ellipse cx="1.900" cy="16" rx="1.500" ry="1.800" fill="#dcb89a"/><ellipse cx="20.100" cy="16" rx="1.500" ry="1.800" fill="#dcb89a"/><ellipse cx="5" cy="28.300" rx="1.700" ry="1.200" fill="#dcb89a"/><ellipse cx="17" cy="28.300" rx="1.700" ry="1.200" fill="#dcb89a"/><circle cx="7.400" cy="8.600" r="3.400" fill="#fff"/><circle cx="14.600" cy="8.600" r="3.400" fill="#fff"/><circle cx="7.900" cy="8.800" r="1.400" fill="#111"/><circle cx="15.100" cy="8.800" r="1.400" fill="#111"/><ellipse cx="11" cy="11.700" rx="1.400" ry="1.100" fill="#222"/><rect x="10" y="12.700" width="2" height="1.900" rx="0.500" fill="#fff"/></svg>
<div class="t" style="left:54px">client.go</div>
<svg class="x" style="left:156px" viewBox="0 0 16 16"><path d="M1 1l14 14M15 1L1 15" stroke="#7d8082" stroke-width="1.800"/></svg>
</div>
<div class="tab v" style="left:1002px;width:194px">
<svg class="ab" style="left:21px;top:10px" width="21.1" height="28.8" viewBox="0 0 22 30"><circle cx="3.800" cy="5" r="2.700" fill="#6cb5e0"/><circle cx="18.200" cy="5" r="2.700" fill="#6cb5e0"/><path d="M11 1.500C6 1.500 3.500 5 3.500 10c0 4-1.500 7.500-1.500 12 0 4.800 4 7 9 7s9-2.200 9-7c0-4.500-1.500-8-1.500-12 0-5-2.500-8.500-7.500-8.500z" fill="#6cb5e0"/><ellipse cx="1.900" cy="16" rx="1.500" ry="1.800" fill="#dcb89a"/><ellipse cx="20.100" cy="16" rx="1.500" ry="1.800" fill="#dcb89a"/><ellipse cx="5" cy="28.300" rx="1.700" ry="1.200" fill="#dcb89a"/><ellipse cx="17" cy="28.300" rx="1.700" ry="1.200" fill="#dcb89a"/><circle cx="7.400" cy="8.600" r="3.400" fill="#fff"/><circle cx="14.600" cy="8.600" r="3.400" fill="#fff"/><circle cx="7.900" cy="8.800" r="1.400" fill="#111"/><circle cx="15.100" cy="8.800" r="1.400" fill="#111"/><ellipse cx="11" cy="11.700" rx="1.400" ry="1.100" fill="#222"/><rect x="10" y="12.700" width="2" height="1.900" rx="0.500" fill="#fff"/></svg>
<div class="t" style="left:54px">codec.go</div>
<svg class="x" style="left:162px" viewBox="0 0 16 16"><path d="M1 1l14 14M15 1L1 15" stroke="#7d8082" stroke-width="1.800"/></svg>
</div>
<div class="tab v" style="left:1196px;width:234px">
<svg class="ab" style="left:21px;top:10px" width="21.1" height="28.8" viewBox="0 0 22 30"><circle cx="3.800" cy="5" r="2.700" fill="#6cb5e0"/><circle cx="18.200" cy="5" r="2.700" fill="#6cb5e0"/><path d="M11 1.500C6 1.500 3.500 5 3.500 10c0 4-1.500 7.500-1.500 12 0 4.800 4 7 9 7s9-2.200 9-7c0-4.500-1.500-8-1.500-12 0-5-2.500-8.500-7.500-8.500z" fill="#6cb5e0"/><ellipse cx="1.900" cy="16" rx="1.500" ry="1.800" fill="#dcb89a"/><ellipse cx="20.100" cy="16" rx="1.500" ry="1.800" fill="#dcb89a"/><ellipse cx="5" cy="28.300" rx="1.700" ry="1.200" fill="#dcb89a"/><ellipse cx="17" cy="28.300" rx="1.700" ry="1.200" fill="#dcb89a"/><circle cx="7.400" cy="8.600" r="3.400" fill="#fff"/><circle cx="14.600" cy="8.600" r="3.400" fill="#fff"/><circle cx="7.900" cy="8.800" r="1.400" fill="#111"/><circle cx="15.100" cy="8.800" r="1.400" fill="#111"/><ellipse cx="11" cy="11.700" rx="1.400" ry="1.100" fill="#222"/><rect x="10" y="12.700" width="2" height="1.900" rx="0.500" fill="#fff"/></svg>
<div class="t" style="left:54px">interfaces.go</div>
<svg class="x" style="left:202px" viewBox="0 0 16 16"><path d="M1 1l14 14M15 1L1 15" stroke="#7d8082" stroke-width="1.800"/></svg>
</div>
<div class="tab v" style="left:1430px;width:242px">
<svg class="ab" style="left:21px;top:10px" width="21.1" height="28.8" viewBox="0 0 22 30"><circle cx="3.800" cy="5" r="2.700" fill="#6cb5e0"/><circle cx="18.200" cy="5" r="2.700" fill="#6cb5e0"/><path d="M11 1.500C6 1.500 3.500 5 3.500 10c0 4-1.500 7.500-1.500 12 0 4.800 4 7 9 7s9-2.200 9-7c0-4.500-1.500-8-1.500-12 0-5-2.500-8.500-7.500-8.500z" fill="#6cb5e0"/><ellipse cx="1.900" cy="16" rx="1.500" ry="1.800" fill="#dcb89a"/><ellipse cx="20.100" cy="16" rx="1.500" ry="1.800" fill="#dcb89a"/><ellipse cx="5" cy="28.300" rx="1.700" ry="1.200" fill="#dcb89a"/><ellipse cx="17" cy="28.300" rx="1.700" ry="1.200" fill="#dcb89a"/><circle cx="7.400" cy="8.600" r="3.400" fill="#fff"/><circle cx="14.600" cy="8.600" r="3.400" fill="#fff"/><circle cx="7.900" cy="8.800" r="1.400" fill="#111"/><circle cx="15.100" cy="8.800" r="1.400" fill="#111"/><ellipse cx="11" cy="11.700" rx="1.400" ry="1.100" fill="#222"/><rect x="10" y="12.700" width="2" height="1.900" rx="0.500" fill="#fff"/></svg>
<div class="t" style="left:54px">mediatype.go</div>
<svg class="x" style="left:210px" viewBox="0 0 16 16"><path d="M1 1l14 14M15 1L1 15" stroke="#7d8082" stroke-width="1.800"/></svg>
</div>
<div class="tab v" style="left:1672px;width:210px">
<svg class="ab" style="left:21px;top:10px" width="21.1" height="28.8" viewBox="0 0 22 30"><circle cx="3.800" cy="5" r="2.700" fill="#6cb5e0"/><circle cx="18.200" cy="5" r="2.700" fill="#6cb5e0"/><path d="M11 1.500C6 1.500 3.500 5 3.500 10c0 4-1.500 7.500-1.500 12 0 4.800 4 7 9 7s9-2.200 9-7c0-4.500-1.500-8-1.500-12 0-5-2.500-8.500-7.500-8.500z" fill="#6cb5e0"/><ellipse cx="1.900" cy="16" rx="1.500" ry="1.800" fill="#dcb89a"/><ellipse cx="20.100" cy="16" rx="1.500" ry="1.800" fill="#dcb89a"/><ellipse cx="5" cy="28.300" rx="1.700" ry="1.200" fill="#dcb89a"/><ellipse cx="17" cy="28.300" rx="1.700" ry="1.200" fill="#dcb89a"/><circle cx="7.400" cy="8.600" r="3.400" fill="#fff"/><circle cx="14.600" cy="8.600" r="3.400" fill="#fff"/><circle cx="7.900" cy="8.800" r="1.400" fill="#111"/><circle cx="15.100" cy="8.800" r="1.400" fill="#111"/><ellipse cx="11" cy="11.700" rx="1.400" ry="1.100" fill="#222"/><rect x="10" y="12.700" width="2" height="1.900" rx="0.500" fill="#fff"/></svg>
<div class="t" style="left:54px">request.go</div>
<svg class="x" style="left:178px" viewBox="0 0 16 16"><path d="M1 1l14 14M15 1L1 15" stroke="#7d8082" stroke-width="1.800"/></svg>
</div>
<div class="tab v" style="left:1882px;width:190px">
<svg class="ab" style="left:22px;top:10px" width="21.1" height="28.8" viewBox="0 0 22 30"><circle cx="3.800" cy="5" r="2.700" fill="#6cb5e0"/><circle cx="18.200" cy="5" r="2.700" fill="#6cb5e0"/><path d="M11 1.500C6 1.500 3.500 5 3.500 10c0 4-1.500 7.500-1.500 12 0 4.800 4 7 9 7s9-2.200 9-7c0-4.500-1.500-8-1.500-12 0-5-2.500-8.500-7.500-8.500z" fill="#6cb5e0"/><ellipse cx="1.900" cy="16" rx="1.500" ry="1.800" fill="#dcb89a"/><ellipse cx="20.100" cy="16" rx="1.500" ry="1.800" fill="#dcb89a"/><ellipse cx="5" cy="28.300" rx="1.700" ry="1.200" fill="#dcb89a"/><ellipse cx="17" cy="28.300" rx="1.700" ry="1.200" fill="#dcb89a"/><circle cx="7.400" cy="8.600" r="3.400" fill="#fff"/><circle cx="14.600" cy="8.600" r="3.400" fill="#fff"/><circle cx="7.900" cy="8.800" r="1.400" fill="#111"/><circle cx="15.100" cy="8.800" r="1.400" fill="#111"/><ellipse cx="11" cy="11.700" rx="1.400" ry="1.100" fill="#222"/><rect x="10" y="12.700" width="2" height="1.900" rx="0.500" fill="#fff"/></svg>
<div class="t" style="left:54px">types.go</div>
<svg class="x" style="left:158px" viewBox="0 0 16 16"><path d="M1 1l14 14M15 1L1 15" stroke="#7d8082" stroke-width="1.800"/></svg>
</div>
</div>
<div id="editor" class="ab"><div id="gutter" class="ab"></div><div id="gline" class="ab"></div>
<div class="ln" style="top:-26px">107</div>
<div class="ln" style="top:20px">108</div>
<div class="cl" style="top:20px"><span class="c">// runCommand runs the scheduler.</span></div>
<div class="ln" style="top:66px">109</div>
<svg class="fold" style="top:80px" viewBox="0 0 24 29"><path d="M1 1h22v17L12 28 1 18z" fill="#2b2b2b" stroke="#5c5e60" stroke-width="1.800"/><path d="M6 12h12" stroke="#6e7072" stroke-width="1.800"/></svg>
<div class="cl" style="top:66px"><span class="k">func</span> <span class="fd">runCommand</span>(<span class="p">cmd</span> *cobra.<span class="ty">Command</span><span class="k">,</span> <span class="p">args</span> []<span class="ty">string</span><span class="k">,</span> <span class="p">opts</span> *options.<span class="ty">Options</span>) <span class="ty">error</span> {</div>
<div class="ln" style="top:112px">110</div>
<div class="cl" style="top:112px">    verflag.<span class="fc">PrintAndExitIfRequested</span>()</div>
<div class="ln" style="top:158px">111</div>
<div class="cl" style="top:158px">    utilflag.<span class="fc">PrintFlags</span>(<span class="p">cmd</span>.<span class="fc">Flags</span>())</div>
<div class="ln" style="top:204px">112</div>
<div class="ln" style="top:250px">113</div>
<svg class="fold" style="top:264px" viewBox="0 0 24 29"><path d="M1 1h22v17L12 28 1 18z" fill="#2b2b2b" stroke="#5c5e60" stroke-width="1.800"/><path d="M6 12h12" stroke="#6e7072" stroke-width="1.800"/></svg>
<div class="cl" style="top:250px">    <span class="k">if</span> len(<span class="p">args</span>) != <span class="n">0</span> {</div>
<div class="ln" style="top:296px">114</div>
<div class="cl" style="top:296px">        <span class="hl">fmt.<span class="fc">Fprint</span>(os.<span class="p">Stderr</span><span class="k">,</span> <span class="h" style="width:80px">a...:</span><span class="s">"arguments are not supported\n"</span>)</span></div>
<div class="ln" style="top:342px">115</div>
<svg class="fold" style="top:351px" viewBox="0 0 24 29"><path d="M12 1l11 10v17H1V11z" fill="#2b2b2b" stroke="#5c5e60" stroke-width="1.800"/><path d="M6 17h12" stroke="#6e7072" stroke-width="1.800"/></svg>
<div class="cl" style="top:342px">    }</div>
<div class="ln" style="top:388px">116</div>
<div class="ln" style="top:434px">117</div>
<svg class="fold" style="top:448px" viewBox="0 0 24 29"><path d="M1 1h22v17L12 28 1 18z" fill="#2b2b2b" stroke="#5c5e60" stroke-width="1.800"/><path d="M6 12h12" stroke="#6e7072" stroke-width="1.800"/></svg>
<div class="cl" style="top:434px">    <span class="k">if</span> <span class="sv">errs</span> := <span class="p">opts</span>.<span class="fc">Validate</span>()<span class="k">;</span> len(<span class="sv">errs</span>) &gt; <span class="n">0</span> {</div>
<div class="ln" style="top:480px">118</div>
<div class="cl" style="top:480px">        <span class="hl">fmt.<span class="fc">Fprintf</span>(os.<span class="p">Stderr</span><span class="k">,</span> <span class="h" style="width:146px">format:</span><span class="s">"%v\n"</span><span class="k">,</span> utilerrors.<span class="fc">NewAggregate</span>(<span class="sv">errs</span>))</span></div>
<div class="ln" style="top:526px">119</div>
<div class="cl" style="top:526px">        os.<span class="fc">Exit</span>(<span class="h" style="width:114px">code:</span><span class="n">1</span>)</div>
<div class="ln" style="top:572px">120</div>
<svg class="fold" style="top:581px" viewBox="0 0 24 29"><path d="M12 1l11 10v17H1V11z" fill="#2b2b2b" stroke="#5c5e60" stroke-width="1.800"/><path d="M6 17h12" stroke="#6e7072" stroke-width="1.800"/></svg>
<div class="cl" style="top:572px">    }</div>
<div class="ln" style="top:618px">121</div>
<div class="ln" style="top:664px">122</div>
<svg class="fold" style="top:678px" viewBox="0 0 24 29"><path d="M1 1h22v17L12 28 1 18z" fill="#2b2b2b" stroke="#5c5e60" stroke-width="1.800"/><path d="M6 12h12" stroke="#6e7072" stroke-width="1.800"/></svg>
<div class="cl" style="top:664px">    <span class="k">if</span> len(<span class="p">opts</span>.<span class="f">WriteConfigTo</span>) &gt; <span class="n">0</span> {</div>
<div class="ln" style="top:710px">123</div>
<svg class="fold" style="top:724px" viewBox="0 0 24 29"><path d="M1 1h22v17L12 28 1 18z" fill="#2b2b2b" stroke="#5c5e60" stroke-width="1.800"/><path d="M6 12h12" stroke="#6e7072" stroke-width="1.800"/></svg>
<div class="cl" style="top:710px">        <span class="k">if</span> <span class="sv">err</span> := options.<span class="fc">WriteConfigFile</span>(<span class="p">opts</span>.<span class="f">WriteConfigTo</span><span class="k">,</span> &amp;<span class="p">opts</span>.<span class="f">ComponentConfig</span>)<span class="k">;</span> <span class="sv">err</span> != nil {</div>
<div class="ln" style="top:756px">124</div>
<div class="cl" style="top:756px">            <span class="hl">fmt.<span class="fc">Fprintf</span>(os.<span class="p">Stderr</span><span class="k">,</span> <span class="h" style="width:146px">format:</span><span class="s">"%v\n"</span><span class="k">,</span> <span class="sv">err</span>)</span></div>
<div class="ln" style="top:802px">125</div>
<div class="cl" style="top:802px">            os.<span class="fc">Exit</span>(<span class="h" style="width:114px">code:</span><span class="n">1</span>)</div>
<div class="ln" style="top:848px">126</div>
<svg class="fold" style="top:857px" viewBox="0 0 24 29"><path d="M12 1l11 10v17H1V11z" fill="#2b2b2b" stroke="#5c5e60" stroke-width="1.800"/><path d="M6 17h12" stroke="#6e7072" stroke-width="1.800"/></svg>
<div class="cl" style="top:848px">        }</div>
<div class="ln" style="top:894px">127</div>
<div class="cl" style="top:894px">        klog.<span class="fc">Infof</span>(<span class="h" style="width:146px">format:</span><span class="s">"Wrote configuration to: %s\n"</span><span class="k">,</span> <span class="p">opts</span>.<span class="f">WriteConfigTo</span>)</div>
<div class="ln" style="top:940px">128</div>
<svg class="fold" style="top:949px" viewBox="0 0 24 29"><path d="M12 1l11 10v17H1V11z" fill="#2b2b2b" stroke="#5c5e60" stroke-width="1.800"/><path d="M6 17h12" stroke="#6e7072" stroke-width="1.800"/></svg>
<div class="cl" style="top:940px">    }</div>
<div class="ln" style="top:986px">129</div>
<div class="ln" style="top:1032px">130</div>
<div class="cl" style="top:1032px">    <span class="lv">c</span><span class="k">,</span> <span class="lv">err</span> := <span class="p">opts</span>.<span class="fc">Config</span>()</div>
<div class="ln" style="top:1078px">131</div>
<svg class="fold" style="top:1092px" viewBox="0 0 24 29"><path d="M1 1h22v17L12 28 1 18z" fill="#2b2b2b" stroke="#5c5e60" stroke-width="1.800"/><path d="M6 12h12" stroke="#6e7072" stroke-width="1.800"/></svg>
<div class="cl" style="top:1078px">    <span class="k">if</span> <span class="lv">err</span> != nil {</div>
<div class="ln" style="top:1124px">132</div>
<div class="cl" style="top:1124px">        <span class="hl">fmt.<span class="fc">Fprintf</span>(os.<span class="p">Stderr</span><span class="k">,</span> <span class="h" style="width:146px">format:</span><span class="s">"%v\n"</span><span class="k">,</span> <span class="lv">err</span>)</span></div>
<div class="ln" style="top:1170px">133</div>
<div class="cl" style="top:1170px">        os.<span class="fc">Exit</span>(<span class="h" style="width:114px">code:</span><span class="n">1</span>)</div>
<div class="ln" style="top:1216px">134</div>
<svg class="fold" style="top:1225px" viewBox="0 0 24 29"><path d="M12 1l11 10v17H1V11z" fill="#2b2b2b" stroke="#5c5e60" stroke-width="1.800"/><path d="M6 17h12" stroke="#6e7072" stroke-width="1.800"/></svg>
<div class="cl" style="top:1216px">    }</div>
<div class="ln" style="top:1262px">135</div>
<div class="ln" style="top:1308px">136</div>
<div class="cl" style="top:1308px">    <span class="lv">stopCh</span> := <span class="bf">make</span>(<span class="k">chan</span> <span class="k">struct</span>{})</div>
<div class="ln" style="top:1354px">137</div>
<div class="ln" style="top:1400px">138</div>
<div class="cl" style="top:1400px">    <span class="c">// Get the completed config</span></div>
<div class="ln" style="top:1446px">139</div>
<div class="cl" style="top:1446px">    <span class="lv">cc</span> := <span class="lv">c</span>.<span class="fc">Complete</span>()</div>
<div class="ln" style="top:1492px">140</div>
<div class="ln" style="top:1538px">141</div>
<div class="cl" style="top:1538px">    <span class="c">// To help debugging, immediately log version</span></div>
<div class="ln" style="top:1584px">142</div>
<div class="cl" style="top:1584px">    klog.<span class="fc">Infof</span>(<span class="h" style="width:146px">format:</span><span class="s">"Version: %+v"</span><span class="k">,</span> version.<span class="fc">Get</span>())</div>
<div class="ln" style="top:1630px">143</div>
<div class="ln" style="top:1676px">144</div>
<svg class="fold" style="top:1690px" viewBox="0 0 24 29"><path d="M1 1h22v17L12 28 1 18z" fill="#2b2b2b" stroke="#5c5e60" stroke-width="1.800"/><path d="M6 12h12" stroke="#6e7072" stroke-width="1.800"/></svg>
<div class="cl" style="top:1676px">    <span class="c">// Apply algorithms based on feature gates.</span></div>
<div class="ln" style="top:1722px">145</div>
<svg class="fold" style="top:1731px" viewBox="0 0 24 29"><path d="M12 1l11 10v17H1V11z" fill="#2b2b2b" stroke="#5c5e60" stroke-width="1.800"/><path d="M6 17h12" stroke="#6e7072" stroke-width="1.800"/></svg>
<div class="cl" style="top:1722px">    <span class="c">// </span><span class="td">TODO: make configurable?</span></div>
<div class="ln" style="top:1768px">146</div>
<div class="cl" style="top:1768px">    algorithmprovider.<span class="fc">ApplyFeatureGates</span>()</div>
<div class="ln" style="top:1814px">147</div>
<div class="ln" style="top:1860px">148</div>
<div class="cl" style="top:1860px">    <span class="c">// </span><span class="cw">Configz</span><span class="c"> registration.</span></div>
<div class="ln" style="top:1906px">149</div>
<svg class="fold" style="top:1920px" viewBox="0 0 24 29"><path d="M1 1h22v17L12 28 1 18z" fill="#2b2b2b" stroke="#5c5e60" stroke-width="1.800"/><path d="M6 12h12" stroke="#6e7072" stroke-width="1.800"/></svg>
<div class="cl" style="top:1906px">    <span class="k">if</span> <span class="sv">cz</span><span class="k">,</span> <span class="sv">err</span> := configz.<span class="fc">New</span>(<span class="h" style="width:124px">name:</span><span class="s">"</span><span class="sw">componentconfig</span><span class="s">"</span>)<span class="k">;</span> <span class="sv">err</span> == nil {</div>
<div class="ln" style="top:1952px">150</div>
<div class="cl" style="top:1952px">        <span class="sv">cz</span>.<span class="fc">Set</span>(<span class="lv">cc</span>.<span class="f">ComponentConfig</span>)</div>
<div class="ln" style="top:1998px">151</div>
<svg class="fold" style="top:2007px" viewBox="0 0 24 29"><path d="M12 1l11 10v17H1V11z" fill="#2b2b2b" stroke="#5c5e60" stroke-width="1.800"/><path d="M6 17h12" stroke="#6e7072" stroke-width="1.800"/></svg>
<div class="cl" style="top:1998px">    } <span class="k">else</span> {</div>
<div class="ln" style="top:2044px">152</div>
<div class="cl" style="top:2044px">        <span class="k">return</span> fmt.<span class="fc">Errorf</span>(<span class="h" style="width:146px">format:</span><span class="s">"unable to register configz: %s"</span><span class="k">,</span> <span class="sv">err</span>)</div>
<div class="ln" style="top:2090px">153</div>
<svg class="fold" style="top:2099px" viewBox="0 0 24 29"><path d="M12 1l11 10v17H1V11z" fill="#2b2b2b" stroke="#5c5e60" stroke-width="1.800"/><path d="M6 17h12" stroke="#6e7072" stroke-width="1.800"/></svg>
<div class="cl" style="top:2090px">    }</div>
<div class="ln" style="top:2136px">154</div>
<div class="ln" style="top:2182px">155</div>
<div class="cl" style="top:2182px">    <span class="k">return</span> <span class="fc">Run</span>(<span class="lv">cc</span><span class="k">,</span> <span class="lv">stopCh</span>)</div>
<div class="ln" style="top:2228px">156</div>
<svg class="fold" style="top:2237px" viewBox="0 0 24 29"><path d="M12 1l11 10v17H1V11z" fill="#2b2b2b" stroke="#5c5e60" stroke-width="1.800"/><path d="M6 17h12" stroke="#6e7072" stroke-width="1.800"/></svg>
<div class="cl" style="top:2228px">}</div>
<div class="ig" style="left:274px;top:296px;height:46px"></div>
<div class="ig" style="left:274px;top:480px;height:92px"></div>
<div class="ig" style="left:274px;top:710px;height:230px"></div>
<div class="ig" style="left:362px;top:756px;height:92px"></div>
<div class="ig" style="left:274px;top:1124px;height:92px"></div>
<div class="ig" style="left:274px;top:1952px;height:46px"></div>
<div class="ig" style="left:274px;top:2044px;height:46px"></div>
<div class="red" style="left:221.5px;top:1267px;width:721.5px;height:108px"></div>
<div class="red" style="left:242px;top:1387px;width:654px;height:121px"></div>
<div class="red" style="left:400px;top:2158px;width:390px;height:92px"></div>
</div>
</body></html>
